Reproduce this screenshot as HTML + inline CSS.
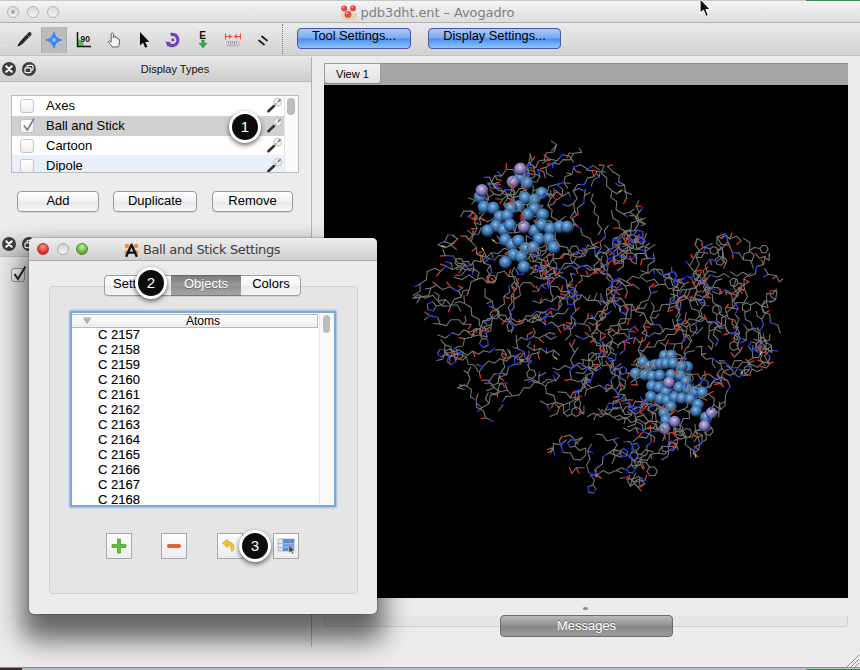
<!DOCTYPE html>
<html lang="en">
<head>
<meta charset="utf-8">
<title>pdb3dht.ent – Avogadro</title>
<style>
*{box-sizing:border-box;margin:0;padding:0}
html,body{width:860px;height:670px;overflow:hidden}
body{position:relative;background:#ececec;font-family:"Liberation Sans",sans-serif;font-size:13px;color:#000}
.abs{position:absolute}
#titlebar{left:0;top:0;width:860px;height:23px;background:linear-gradient(#f4f4f4,#dddddd);border-bottom:1px solid #b0b0b0;border-top:1px solid #c8c8c8}
#titlebar .t{position:absolute;left:360.5px;top:3.5px;font-family:"DejaVu Sans","Liberation Sans",sans-serif;font-size:13px;color:#808080;white-space:nowrap;letter-spacing:-0.1px}
.tl{position:absolute;width:12px;height:12px;border-radius:50%;border:1px solid #b4b4b4;background:linear-gradient(#dcdcdc,#f4f4f4)}
#toolbar{left:0;top:23px;width:860px;height:33px;background:linear-gradient(#ebebeb,#d2d2d2);border-bottom:1px solid #c2c2c2}
.bluebtn{position:absolute;top:28px;height:21px;border:1px solid #4a55a8;border-radius:4px;background:linear-gradient(#a9c9f4 0%,#79aaf0 48%,#4e8fee 52%,#8ec4fb 100%);text-align:center;font-size:12.8px;line-height:14.5px;color:#000}
.dockhead{left:0;width:311px;height:26px;background:linear-gradient(#e9e9e9,#cdcdcd);border-bottom:1px solid #bdbdbd}
.dockhead .lbl{position:absolute;left:0;width:350px;text-align:center;top:6.7px;font-size:11px;color:#111}
.btn{position:absolute;height:21px;border:1px solid #9a9a9a;border-radius:4px;background:linear-gradient(#ffffff,#f2f2f2 50%,#e9e9e9 51%,#f6f6f6);text-align:center;font-size:13px;line-height:17px;box-shadow:0 1px 0 rgba(0,0,0,.08)}
.row{position:absolute;left:0;width:272px;height:20px}
.row .cb{position:absolute;left:8px;top:3px;width:14px;height:14px;border:1px solid #c4c4c4;border-radius:3px;background:linear-gradient(#fff,#efefef)}
.row .tx{position:absolute;left:34px;top:2px;font-size:13px;line-height:16px;white-space:nowrap}
.badge{position:absolute;width:32px;height:32px;border-radius:50%;background:#0c0c0c;border:3px solid #fff;box-shadow:0 2px 5px rgba(0,0,0,.6);color:#fff;font-size:15px;line-height:26px;text-align:center}
.sqbtn{position:absolute;top:533px;width:26px;height:26px;border:1px solid #a8a8a8;background:linear-gradient(#fdfdfd,#ececec)}
.atom{position:absolute;left:26px;font-size:13px;line-height:15px;white-space:nowrap;color:#000;-webkit-text-stroke:0.15px #000}
</style>
</head>
<body>
<!-- main window title bar -->
<div id="titlebar" class="abs">
  <div class="tl" style="left:6.9px;top:4.5px"><div style="position:absolute;left:3px;top:3px;width:4px;height:4px;border-radius:50%;background:#a8a8a8"></div></div>
  <div class="tl" style="left:26.8px;top:4.5px"></div>
  <div class="tl" style="left:46.7px;top:4.5px"></div>
  <svg class="abs" style="left:340px;top:3px" width="18" height="18" viewBox="0 0 18 18"><path d="M1.5 8 Q1.5 5.5 9 5.5 Q16.5 5.5 16.5 8 V12.5 Q16.5 16.5 9 16.5 Q1.5 16.5 1.5 12.5 Z" fill="#e6d4b0"/><ellipse cx="9" cy="8" rx="7.5" ry="3" fill="#f0e2c4"/><circle cx="4.2" cy="4.6" r="3" fill="#e0454c"/><circle cx="13" cy="4.2" r="3" fill="#e0454c"/><circle cx="8" cy="10.4" r="3.4" fill="#e24a52"/><circle cx="3.4" cy="3.6" r="1" fill="#f4a0a4"/><circle cx="12.2" cy="3.2" r="1" fill="#f4a0a4"/><circle cx="7" cy="9.2" r="1.1" fill="#f4a0a4"/></svg>
  <div class="t">pdb3dht.ent – Avogadro</div>
</div>
<!-- toolbar -->
<div id="toolbar" class="abs"></div>
<div class="abs" style="left:41px;top:27px;width:26px;height:26px;background:#bcbcbc;border-left:1px solid #b0b0b0;border-right:1px solid #b0b0b0"></div>
<svg class="abs" style="left:4px;top:28px" width="6" height="20" viewBox="0 0 6 20"><circle cx="1.5" cy="2.0" r="1" fill="#fff"/><circle cx="1.5" cy="2.6" r="0.8" fill="#c4c4c4"/><circle cx="4" cy="4.6" r="1" fill="#fff"/><circle cx="4" cy="5.2" r="0.8" fill="#c4c4c4"/><circle cx="1.5" cy="7.2" r="1" fill="#fff"/><circle cx="1.5" cy="7.800000000000001" r="0.8" fill="#c4c4c4"/><circle cx="4" cy="9.8" r="1" fill="#fff"/><circle cx="4" cy="10.4" r="0.8" fill="#c4c4c4"/><circle cx="1.5" cy="12.4" r="1" fill="#fff"/><circle cx="1.5" cy="13.0" r="0.8" fill="#c4c4c4"/><circle cx="4" cy="15.0" r="1" fill="#fff"/><circle cx="4" cy="15.6" r="0.8" fill="#c4c4c4"/><circle cx="1.5" cy="17.6" r="1" fill="#fff"/><circle cx="1.5" cy="18.200000000000003" r="0.8" fill="#c4c4c4"/></svg>
<svg class="abs" style="left:14px;top:30px" width="20" height="20" viewBox="0 0 20 20"><path d="M3.5 16.5 L6 11.5 L14.5 2.5 Q16 1.5 17.2 2.8 Q18 4 17 5.2 L8.5 14 Z" fill="#2b2b2b"/><path d="M3.5 16.5 L5 13.3 L6.7 15 Z" fill="#111"/><path d="M12.5 4.6 L15.2 7.2" stroke="#999" stroke-width="0.8"/></svg>
<svg class="abs" style="left:44px;top:30px" width="20" height="20" viewBox="0 0 20 20"><path d="M10 2 Q10.8 8.6 18 10 Q10.8 11.4 10 18 Q9.2 11.4 2 10 Q9.2 8.6 10 2 Z" fill="#3f86f2" stroke="#3f86f2" stroke-width="1.2" stroke-linejoin="round"/><circle cx="10" cy="10" r="2" fill="#8cbcff"/></svg>
<svg class="abs" style="left:75px;top:30px" width="20" height="20" viewBox="0 0 20 20"><path d="M2.5 9 A7 7 0 0 1 9 16 H2.5 Z" fill="#52c04a"/><path d="M2.5 2 V16.5 H16" fill="none" stroke="#111" stroke-width="1.4"/><text x="5.5" y="11.5" font-family="Liberation Sans,sans-serif" font-size="8.5" font-weight="bold" fill="#222">90</text></svg>
<svg class="abs" style="left:104px;top:30px" width="20" height="20" viewBox="0 0 20 20"><path d="M7.2 10 V4.2 Q7.2 3 8.3 3 Q9.4 3 9.4 4.2 V8 L9.6 6.4 Q10.6 5.6 11.5 6.6 L11.7 8 Q12.8 7 13.6 8 L13.8 9 Q14.8 8.4 15.4 9.4 V13 Q15.4 15.5 14 17 H8.6 Q6.5 14.5 4.6 12.4 Q4.2 11.2 5.4 11 Q6.2 11 7.2 12.2 Z" fill="#f4f4f4" stroke="#555" stroke-width="0.9" stroke-linejoin="round"/></svg>
<svg class="abs" style="left:134px;top:30px" width="20" height="20" viewBox="0 0 20 20"><path d="M6 2 L6 15.5 L9 12.7 L11.2 17.8 L13.4 16.8 L11.2 11.9 L15.2 11.7 Z" fill="#0a0a0a"/></svg>
<svg class="abs" style="left:163px;top:30px" width="20" height="20" viewBox="0 0 20 20"><path d="M7.6 4.6 A5.6 5.6 0 1 1 5.4 14" fill="none" stroke="#6d44b8" stroke-width="3.2"/><path d="M2.4 11.4 L8 12.2 L4.6 16.8 Z" fill="#6d44b8"/><circle cx="9.8" cy="9.8" r="1.6" fill="#6d44b8"/></svg>
<svg class="abs" style="left:193px;top:29px" width="20" height="22" viewBox="0 0 20 22"><text x="6.2" y="9.5" font-family="Liberation Sans,sans-serif" font-size="10" font-weight="bold" fill="#111">E</text><path d="M8.7 11 H11.3 V14.2 H14 L10 19 L6 14.2 H8.7 Z" fill="#3aa744" stroke="#2a8a34" stroke-width="0.5"/></svg>
<svg class="abs" style="left:223px;top:30px" width="20" height="20" viewBox="0 0 20 20"><path d="M2.5 3.5 V9.5 M17.5 3.5 V9.5 M2.5 6.5 H8 M12 6.5 H17.5 M6 4.6 L8.3 6.5 L6 8.4 M14 4.6 L11.7 6.5 L14 8.4" fill="none" stroke="#f04a40" stroke-width="1.1"/><rect x="3.5" y="11.5" width="13" height="3.4" fill="#d8d8d8" stroke="#aaa" stroke-width="0.4"/><path d="M5.5 11.5v2M7.5 11.5v3M9.5 11.5v2M11.5 11.5v3M13.5 11.5v2" stroke="#666" stroke-width="0.6"/><path d="M3.5 15.8 H16.5" stroke="#8a8ad0" stroke-width="0.6"/></svg>
<svg class="abs" style="left:253px;top:30px" width="20" height="20" viewBox="0 0 20 20"><path d="M6 10.5 L11 14.5 M9 6.5 L14 10.5" stroke="#222" stroke-width="1.9" stroke-linecap="round"/></svg>
<div class="abs" style="left:282px;top:24px;width:0;height:30px;border-left:1px dotted #7e7e7e"></div>
<div class="bluebtn" style="left:297px;width:114px">Tool Settings...</div>
<div class="bluebtn" style="left:428px;width:133px">Display Settings...</div>

<!-- left dock -->
<div class="abs" style="left:311px;top:57px;width:1px;height:590px;background:#b4b4b4"></div>
<div class="abs dockhead" style="top:56px"><div class="lbl">Display Types</div></div>
<svg class="abs" style="left:1px;top:61px" width="38" height="16" viewBox="0 0 38 16"><circle cx="8" cy="8" r="7" fill="#3d3d3d"/><path d="M5.3 5.3 L10.7 10.7 M10.7 5.3 L5.3 10.7" stroke="#fff" stroke-width="2.1" stroke-linecap="round"/><circle cx="28" cy="8" r="7" fill="#3d3d3d"/><rect x="26" y="4.4" width="6" height="4.8" rx="1.2" fill="none" stroke="#fff" stroke-width="1.2"/><rect x="24" y="6.8" width="6" height="4.8" rx="1.2" fill="#3d3d3d" stroke="#fff" stroke-width="1.2"/></svg>
<div class="abs" style="left:11px;top:95px;width:288px;height:78px;border:1px solid #bcbcbc;background:#fff;overflow:hidden">
  <div class="row" style="top:0"><div class="cb"></div><div class="tx">Axes</div></div>
  <div class="row" style="top:20px;background:#d0d0d0"><div class="cb"></div><div class="tx">Ball and Stick</div>
    <svg style="position:absolute;left:9px;top:1px" width="16" height="16" viewBox="0 0 16 16"><path d="M3 8.5 L6.3 13 L13 1.5" fill="none" stroke="#7c7c7c" stroke-width="1.6"/></svg></div>
  <div class="row" style="top:40px"><div class="cb"></div><div class="tx">Cartoon</div></div>
  <div class="row" style="top:59px;background:#eaf0fb"><div class="cb" style="top:4px"></div><div class="tx" style="top:3px">Dipole</div></div>
  <svg style="position:absolute;left:254px;top:1px" width="17" height="17" viewBox="0 0 17 17"><path d="M2.4 14.2 L8 9" stroke="#333" stroke-width="2.7" stroke-linecap="round"/><circle cx="11.6" cy="5.2" r="3.9" fill="#f0f0f0" stroke="#b4b4b4" stroke-width="0.8"/><path d="M11.8 5 L14.6 2.2" stroke="#777" stroke-width="1.6"/><path d="M9.2 7.6 L10.6 6.2" stroke="#999" stroke-width="1.2"/></svg><svg style="position:absolute;left:254px;top:21px" width="17" height="17" viewBox="0 0 17 17"><path d="M2.4 14.2 L8 9" stroke="#333" stroke-width="2.7" stroke-linecap="round"/><circle cx="11.6" cy="5.2" r="3.9" fill="#f0f0f0" stroke="#b4b4b4" stroke-width="0.8"/><path d="M11.8 5 L14.6 2.2" stroke="#777" stroke-width="1.6"/><path d="M9.2 7.6 L10.6 6.2" stroke="#999" stroke-width="1.2"/></svg><svg style="position:absolute;left:254px;top:41px" width="17" height="17" viewBox="0 0 17 17"><path d="M2.4 14.2 L8 9" stroke="#333" stroke-width="2.7" stroke-linecap="round"/><circle cx="11.6" cy="5.2" r="3.9" fill="#f0f0f0" stroke="#b4b4b4" stroke-width="0.8"/><path d="M11.8 5 L14.6 2.2" stroke="#777" stroke-width="1.6"/><path d="M9.2 7.6 L10.6 6.2" stroke="#999" stroke-width="1.2"/></svg><svg style="position:absolute;left:254px;top:61px" width="17" height="17" viewBox="0 0 17 17"><path d="M2.4 14.2 L8 9" stroke="#333" stroke-width="2.7" stroke-linecap="round"/><circle cx="11.6" cy="5.2" r="3.9" fill="#f0f0f0" stroke="#b4b4b4" stroke-width="0.8"/><path d="M11.8 5 L14.6 2.2" stroke="#777" stroke-width="1.6"/><path d="M9.2 7.6 L10.6 6.2" stroke="#999" stroke-width="1.2"/></svg>
  <div style="position:absolute;left:272px;top:0;width:15px;height:78px;background:#fafafa;border-left:1px solid #e4e4e4"></div>
  <div style="position:absolute;left:275px;top:2px;width:8px;height:17px;border-radius:4px;background:#bcbcbc"></div>
</div>
<div class="btn" style="left:17px;top:191px;width:82px">Add</div>
<div class="btn" style="left:113px;top:191px;width:84px">Duplicate</div>
<div class="btn" style="left:212px;top:191px;width:81px">Remove</div>
<div class="abs dockhead" style="top:231px"></div>
<svg class="abs" style="left:1px;top:236px" width="38" height="16" viewBox="0 0 38 16"><circle cx="8" cy="8" r="7" fill="#3d3d3d"/><path d="M5.3 5.3 L10.7 10.7 M10.7 5.3 L5.3 10.7" stroke="#fff" stroke-width="2.1" stroke-linecap="round"/><circle cx="28" cy="8" r="7" fill="#3d3d3d"/><rect x="26" y="4.4" width="6" height="4.8" rx="1.2" fill="none" stroke="#fff" stroke-width="1.2"/><rect x="24" y="6.8" width="6" height="4.8" rx="1.2" fill="#3d3d3d" stroke="#fff" stroke-width="1.2"/></svg>
<div class="abs" style="left:11px;top:268px;width:14px;height:14px;border:1px solid #9a9a9a;border-radius:3px;background:linear-gradient(#fff,#e8e8e8)"></div>
<svg class="abs" style="left:11px;top:264px" width="18" height="18" viewBox="0 0 18 18"><path d="M3.5 10 L7 15 L14.5 2.5" fill="none" stroke="#222" stroke-width="2"/></svg>

<!-- right view -->
<div class="abs" style="left:324px;top:63px;width:524px;height:22px;background:#a6a6a6;border-top:1px solid #8f8f8f"></div>
<div class="abs" style="left:324px;top:63px;width:57px;height:21px;background:linear-gradient(#f2f2f2,#e2e2e2);border:1px solid #9c9c9c;border-bottom-color:#8a8a8a;border-radius:0 0 4px 4px;font-size:11px;line-height:21px;padding-left:11px">View 1</div>
<div class="abs" style="left:324px;top:85px;width:524px;height:513px;background:#000"></div>
<svg class="abs" style="left:324px;top:85px" width="524" height="513" viewBox="0 0 524 513">
<defs><radialGradient id="sb" cx="44%" cy="36%" r="60%"><stop offset="0" stop-color="#9ccaf0"/><stop offset="0.2" stop-color="#679fd2"/><stop offset="0.55" stop-color="#4278ae"/><stop offset="0.82" stop-color="#284f7c"/><stop offset="1" stop-color="#10263e"/></radialGradient><radialGradient id="sp" cx="44%" cy="36%" r="60%"><stop offset="0" stop-color="#dccff0"/><stop offset="0.25" stop-color="#aa9ed0"/><stop offset="0.6" stop-color="#7c74b0"/><stop offset="0.85" stop-color="#504a86"/><stop offset="1" stop-color="#26224a"/></radialGradient></defs>
<g fill="none" stroke-linecap="round">
<path stroke="#747474" stroke-width="1.1" d="M244.2 223.7L240.0 229.0M240.0 229.0L233.6 228.1M233.6 228.1L228.8 232.0M228.8 232.0L227.6 228.7M228.8 232.0L225.6 231.3M222.3 230.7L224.7 228.4M222.3 230.7L215.6 235.8M215.6 235.8L214.4 232.5M215.6 235.8L209.1 232.4M209.1 232.4L213.2 229.0M209.1 232.4L203.1 236.5M388.4 206.5L395.6 209.2M395.6 209.2L396.3 206.6M395.6 209.2L398.4 206.9M401.2 204.7L401.9 207.4M401.2 204.7L408.3 208.7M408.3 208.7L414.7 203.6M414.7 203.6L416.5 206.2M414.7 203.6L420.7 204.8M420.7 204.8L419.6 199.3M419.6 199.3L414.2 198.1M414.2 198.1L411.3 201.3M411.3 201.3L407.1 200.4M407.1 200.4L405.8 196.3M405.8 196.3L408.7 193.2M408.7 193.2L412.9 194.1M412.9 194.1L414.2 198.1M420.7 204.8L423.5 211.7M423.5 211.7L419.8 217.9M419.8 217.9L412.7 217.5M412.7 217.5L409.1 223.4M409.1 223.4L411.9 223.6M334.4 319.5L335.6 326.9M335.6 326.9L342.4 329.9M342.4 329.9L344.5 337.9M344.5 337.9L347.4 339.4M350.2 340.8L351.1 338.1M350.2 340.8L349.4 348.7M349.4 348.7L353.6 346.0M353.6 346.0L358.4 347.0M358.4 347.0L361.5 343.5M361.5 343.5L366.1 344.4M366.1 344.4L367.6 348.9M367.6 348.9L364.5 352.4M364.5 352.4L359.9 351.5M359.9 351.5L358.4 347.0M349.4 348.7L354.2 353.6M354.2 353.6L352.0 354.7M354.2 353.6L352.5 361.0M352.5 361.0L348.8 363.0M345.1 365.1L343.6 371.6M343.6 371.6L337.8 374.7M155.7 169.5L162.3 172.7M162.3 172.7L161.7 170.3M162.3 172.7L167.5 167.7M167.5 167.7L169.2 173.0M167.5 167.7L174.2 168.5M174.2 168.5L180.1 163.3M180.1 163.3L185.8 165.2M185.8 165.2L183.2 167.1M185.8 165.2L191.3 161.6M191.3 161.6L193.0 166.5M193.0 166.5L195.8 166.6M191.3 161.6L198.0 163.0M198.0 163.0L202.6 158.3M202.6 158.3L203.7 161.0M202.6 158.3L202.1 150.7M202.1 150.7L205.0 152.2M260.2 382.8L252.1 382.8M252.1 382.8L253.7 385.8M252.1 382.8L248.0 388.4M248.0 388.4L246.6 385.3M228.6 143.8L222.1 146.4M222.1 146.4L224.4 151.4M224.4 151.4L220.7 155.5M222.1 146.4L220.1 152.4M220.1 152.4L223.5 152.7M220.1 152.4L224.6 156.5M224.6 156.5L222.5 157.9M224.6 156.5L224.7 164.9M224.7 164.9L229.8 168.9M229.8 168.9L226.6 170.0M229.8 168.9L228.7 174.9M228.7 174.9L232.9 179.2M232.9 179.2L231.8 187.6M231.8 187.6L224.4 189.5M163.4 107.7L164.6 114.8M164.6 114.8L159.5 114.4M159.5 114.4L158.6 111.7M164.6 114.8L158.7 119.8M158.7 119.8L161.0 122.2M158.7 119.8L160.8 127.5M160.8 127.5L154.7 128.3M160.8 127.5L155.2 133.1M155.2 133.1L157.8 134.3M155.2 133.1L157.1 139.8M157.1 139.8L153.8 138.7M196.8 268.5L193.7 269.8M190.7 271.2L194.1 274.7M194.1 274.7L196.9 274.9M190.7 271.2L190.7 275.2M190.7 279.2L196.4 279.0M196.4 279.0L199.8 274.5M190.7 279.2L187.7 280.7M184.7 282.1L182.8 289.4M182.8 289.4L177.1 287.8M182.8 289.4L175.3 292.3M175.3 292.3L177.8 294.2M175.3 292.3L173.8 298.3M173.8 298.3L178.8 298.2M178.8 298.2L179.9 300.8M173.8 298.3L166.9 301.1M278.4 265.9L280.6 259.9M280.6 259.9L278.4 257.6M276.2 255.3L278.9 253.1M276.2 255.3L276.8 247.2M276.8 247.2L279.2 248.6M276.8 247.2L271.8 243.1M271.8 243.1L274.2 240.8M271.8 243.1L273.1 235.9M273.1 235.9L266.9 231.8M267.1 101.1L269.9 94.4M269.9 94.4L272.7 93.2M275.5 92.1L273.7 89.9M275.5 92.1L275.6 88.6M275.7 85.1L269.4 80.6M269.4 80.6L266.5 82.3M263.6 83.9L256.5 79.8M256.5 79.8L253.1 80.9M249.7 82.1L251.9 86.2M251.9 86.2L254.3 86.9M249.7 82.1L247.9 89.4M247.9 89.4L242.4 87.8M247.9 89.4L241.1 91.6M241.1 91.6L239.9 97.7M239.9 97.7L246.2 98.3M239.9 97.7L243.8 103.1M162.6 305.7L170.1 302.6M170.1 302.6L166.6 297.9M166.6 297.9L163.4 298.1M170.1 302.6L175.9 306.7M175.9 306.7L171.4 309.9M171.4 309.9L166.4 307.7M175.9 306.7L183.2 305.0M183.2 305.0L182.2 302.0M183.2 305.0L188.4 311.0M188.4 311.0L182.1 311.4M182.1 311.4L180.1 314.3M188.4 311.0L195.4 309.8M195.4 309.8L199.8 302.7M199.8 302.7L205.9 302.9M205.9 302.9L210.5 297.1M210.5 297.1L206.0 294.1M206.0 294.1L200.7 295.5M210.5 297.1L217.9 298.7M217.9 298.7L223.2 294.3M223.2 294.3L231.6 295.8M231.6 295.8L230.3 292.7M231.6 295.8L235.6 290.7M235.6 290.7L233.0 288.6M217.0 103.4L209.1 105.7M209.1 105.7L209.3 101.1M209.3 101.1L207.1 100.0M209.1 105.7L208.7 108.6M208.2 111.6L214.3 111.8M214.3 111.8L215.8 108.8M208.2 111.6L202.3 114.4M202.3 114.4L201.8 110.9M202.3 114.4L199.0 112.5M195.6 110.6L189.0 112.6M189.0 112.6L191.0 107.2M191.0 107.2L188.4 102.0M189.0 112.6L183.0 108.5M183.0 108.5L183.2 113.1M183.2 113.1L185.6 114.1M303.5 341.7L311.2 339.4M311.2 339.4L313.0 331.9M313.0 331.9L320.0 330.3M320.0 330.3L317.5 328.2M320.0 330.3L324.9 336.7M324.9 336.7L321.2 339.4M321.2 339.4L321.3 343.9M324.9 336.7L332.8 336.3M332.8 336.3L330.5 342.3M330.5 342.3L327.0 343.1M210.8 191.5L217.1 194.0M217.1 194.0L223.9 191.1M223.9 191.1L230.3 193.8M230.3 193.8L228.2 196.1M230.3 193.8L236.1 190.9M236.1 190.9L239.1 192.7M242.1 194.6L243.3 201.4M243.3 201.4L246.1 200.1M243.3 201.4L249.3 202.4M249.3 202.4L251.2 208.8M341.1 309.6L345.1 310.7M349.2 311.8L348.2 314.8M349.2 311.8L355.9 307.0M355.9 307.0L359.5 307.7M363.0 308.5L359.9 312.8M359.9 312.8L356.9 313.2M363.0 308.5L368.7 304.1M368.7 304.1L371.4 305.4M374.1 306.7L378.9 302.2M378.9 302.2L379.2 305.7M378.9 302.2L385.0 302.6M385.0 302.6L384.0 300.2M385.0 302.6L388.2 297.4M388.2 297.4L394.8 297.0M394.8 297.0L399.6 301.9M277.0 208.6L276.9 216.3M276.9 216.3L283.1 219.5M283.1 219.5L289.3 215.9M289.3 215.9L287.6 213.8M289.3 215.9L292.0 217.8M294.7 219.7L295.8 226.1M295.8 226.1L302.4 230.3M302.4 230.3L303.7 224.8M303.7 224.8L301.8 222.3M302.4 230.3L301.1 237.6M301.1 237.6L295.0 239.3M295.0 239.3L298.2 244.8M298.2 244.8L304.6 244.1M295.0 239.3L294.3 246.7M294.3 246.7L288.8 250.7M118.8 164.3L121.0 170.5M121.0 170.5L118.3 170.8M121.0 170.5L125.2 170.8M129.4 171.0L133.7 178.1M133.7 178.1L141.0 179.0M141.0 179.0L138.1 183.8M138.1 183.8L132.5 184.3M141.0 179.0L144.7 185.2M144.7 185.2L151.6 185.2M311.3 131.3L306.1 127.0M306.1 127.0L310.3 124.1M306.1 127.0L299.3 128.9M299.3 128.9L301.4 130.5M299.3 128.9L292.1 124.7M292.1 124.7L292.8 116.4M292.8 116.4L286.7 112.4M286.7 112.4L288.0 105.7M288.0 105.7L293.0 108.7M293.0 108.7L295.5 106.8M288.0 105.7L282.7 101.1M282.7 101.1L282.7 93.0M282.7 93.0L277.3 88.1M277.3 88.1L280.1 80.1M280.1 80.1L277.4 80.2M358.8 286.9L366.1 288.1M366.1 288.1L369.6 293.3M369.6 293.3L367.6 296.5M365.6 299.7L358.9 299.2M358.9 299.2L360.6 302.2M358.9 299.2L355.2 304.6M355.2 304.6L358.3 305.5M355.2 304.6L358.7 309.6M358.7 309.6L356.2 317.3M412.1 194.1L409.6 202.0M409.6 202.0L413.3 208.7M413.3 208.7L417.5 204.5M417.5 204.5L417.3 201.2M413.3 208.7L409.6 216.2M409.6 216.2L411.8 219.6M414.1 222.9L412.6 226.1M411.2 229.4L415.0 234.1M415.0 234.1L411.8 241.9M411.8 241.9L408.0 239.2M408.0 239.2L408.3 236.6M411.8 241.9L415.7 247.3M415.7 247.3L410.5 250.3M410.5 250.3L410.2 256.2M410.2 256.2L414.1 258.8M414.1 258.8L413.8 263.4M413.8 263.4L409.7 265.5M409.7 265.5L405.8 262.9M405.8 262.9L406.0 258.3M406.0 258.3L410.2 256.2M415.7 247.3L412.9 254.9M412.9 254.9L410.7 253.8M207.4 187.8L213.3 186.8M213.3 186.8L215.2 183.5M217.0 180.1L218.3 182.6M217.0 180.1L224.6 180.8M224.6 180.8L228.8 173.9M228.8 173.9L235.6 173.4M235.6 173.4L239.8 168.3M239.8 168.3L247.2 170.6M247.2 170.6L249.8 168.8M252.4 166.9L255.4 168.1M258.4 169.2L256.7 171.3M258.4 169.2L263.1 165.4M263.1 165.4L260.3 164.1M251.0 254.6L247.5 262.0M247.5 262.0L246.4 259.8M247.5 262.0L250.8 267.4M250.8 267.4L254.0 262.6M250.8 267.4L246.5 274.7M246.5 274.7L249.4 281.3M249.4 281.3L254.6 278.1M254.6 278.1L257.8 279.2M249.4 281.3L247.7 283.8M245.9 286.2L247.4 294.5M247.4 294.5L243.8 295.0M247.4 294.5L254.3 297.1M254.3 297.1L261.7 293.4M261.7 293.4L266.6 297.2M378.9 207.4L382.5 201.3M382.5 201.3L385.1 205.7M385.1 205.7L384.5 208.4M382.5 201.3L378.5 194.0M378.5 194.0L383.2 187.0M383.2 187.0L381.3 180.5M381.3 180.5L383.5 177.4M385.7 174.3L386.8 177.3M385.7 174.3L389.5 175.3M393.3 176.2L399.6 171.0M399.6 171.0L398.1 163.0M398.1 163.0L393.9 166.1M393.9 166.1L395.0 171.3M395.0 171.3L399.4 172.7M399.4 172.7L400.4 177.2M400.4 177.2L396.9 180.3M396.9 180.3L392.6 178.9M392.6 178.9L391.6 174.4M391.6 174.4L395.0 171.3M398.1 163.0L404.1 156.9M404.1 156.9L405.5 160.2M404.1 156.9L402.9 153.4M401.7 149.8L399.1 152.0M190.3 182.4L187.7 188.0M187.7 188.0L190.9 195.9M190.9 195.9L187.3 200.8M187.3 200.8L190.1 202.8M187.3 200.8L190.7 206.1M190.7 206.1L193.1 201.9M193.1 201.9L190.9 197.6M190.7 206.1L187.0 211.1M187.0 211.1L189.4 212.2M187.0 211.1L188.1 217.2M188.1 217.2L184.0 222.8M184.0 222.8L187.3 229.4M187.3 229.4L184.3 235.6M184.3 235.6L181.3 230.3M181.3 230.3L175.2 229.9M175.2 229.9L172.7 233.8M172.7 233.8L168.1 233.5M168.1 233.5L166.0 229.4M166.0 229.4L168.6 225.5M168.6 225.5L173.2 225.8M173.2 225.8L175.2 229.9M184.3 235.6L186.9 238.9M189.6 242.2L187.2 247.8M289.6 154.0L297.8 152.7M297.8 152.7L300.3 146.3M300.3 146.3L304.4 150.1M304.4 150.1L309.9 149.9M309.9 149.9L313.2 145.0M318.8 146.6L319.0 152.4M313.5 154.4L309.9 149.9M300.3 146.3L306.9 144.6M306.9 144.6L306.8 149.9M306.8 149.9L304.5 151.5M306.9 144.6L307.6 137.7M307.6 137.7L315.0 134.9M315.0 134.9L311.1 131.0M311.1 131.0L308.1 130.7M315.0 134.9L321.4 138.9M321.4 138.9L317.1 140.8M321.4 138.9L315.2 136.9M315.2 136.9L317.6 133.0M315.2 136.9L313.6 130.0M135.2 188.0L139.3 181.1M139.3 181.1L143.0 181.0M146.6 180.8L144.2 176.4M144.2 176.4L139.2 176.8M139.2 176.8L137.4 180.6M137.4 180.6L133.3 180.9M133.3 180.9L130.9 177.5M130.9 177.5L132.7 173.8M132.7 173.8L136.8 173.4M136.8 173.4L139.2 176.8M146.6 180.8L150.6 175.4M150.6 175.4L156.8 177.0M156.8 177.0L156.8 174.5M156.8 177.0L159.9 174.8M163.0 172.5L166.7 173.9M170.3 175.2L174.5 170.5M174.5 170.5L181.2 171.1M181.2 171.1L185.1 166.2M161.2 203.9L161.1 211.7M161.1 211.7L168.1 216.0M168.1 216.0L162.9 218.6M168.1 216.0L169.5 222.9M169.5 222.9L167.2 222.0M169.5 222.9L174.7 225.9M174.7 225.9L175.4 233.1M175.4 233.1L181.8 237.0M181.8 237.0L184.9 235.3M188.0 233.5L192.9 237.1M192.9 237.1L199.6 235.3M265.9 107.5L260.4 110.5M260.4 110.5L261.0 107.2M260.4 110.5L260.1 114.3M259.8 118.1L253.3 123.1M253.3 123.1L254.2 129.4M254.2 129.4L248.9 132.4M248.9 132.4L250.1 139.5M250.1 139.5L253.4 141.4M256.7 143.3L258.3 150.1M258.3 150.1L266.1 153.4M266.1 153.4L268.7 160.2M268.7 160.2L271.6 158.6M268.7 160.2L274.9 162.8M225.9 195.8L221.6 191.4M221.6 191.4L222.7 184.7M222.7 184.7L217.3 181.1M217.3 181.1L215.7 183.6M217.3 181.1L217.8 174.9M217.8 174.9L223.8 176.4M217.8 174.9L214.6 172.2M274.6 388.7L270.5 389.5M266.4 390.2L270.4 394.4M270.4 394.4L268.9 400.0M268.9 400.0L272.1 404.0M269.3 408.3L264.4 406.9M264.1 401.8L268.9 400.0M266.4 390.2L272.5 389.6M272.5 389.6L277.2 393.7M89.2 210.5L96.2 206.1M96.2 206.1L96.0 198.9M96.0 198.9L93.2 200.4M96.0 198.9L102.4 194.7M102.4 194.7L103.3 186.6M103.3 186.6L111.1 183.3M111.1 183.3L116.6 186.2M116.6 186.2L114.5 188.8M116.6 186.2L119.4 183.8M122.2 181.3L119.1 180.1M122.2 181.3L128.4 184.5M128.4 184.5L127.5 178.4M127.5 178.4L124.2 177.5M128.4 184.5L136.0 181.5M136.0 181.5L141.7 185.0M141.7 185.0L137.8 190.0M137.8 190.0L134.3 190.3M141.7 185.0L148.5 183.2M92.9 217.8L96.3 212.1M96.3 212.1L104.7 210.6M104.7 210.6L106.9 203.1M106.9 203.1L101.2 204.0M106.9 203.1L112.6 200.2M112.6 200.2L110.7 198.5M112.6 200.2L118.5 204.6M118.5 204.6L126.3 201.8M126.3 201.8L124.3 199.2M126.3 201.8L129.8 204.1M133.3 206.4L138.8 202.8M138.8 202.8L136.4 201.8M210.8 83.0L205.2 76.7M205.2 76.7L203.8 79.7M205.2 76.7L206.2 68.7M206.2 68.7L207.9 75.8M207.9 75.8L209.5 73.7M207.9 75.8L205.7 79.0M203.4 82.2L205.5 89.9M205.5 89.9L202.5 88.6M205.5 89.9L200.1 94.5M200.1 94.5L203.0 95.3M200.1 94.5L202.3 102.3M202.3 102.3L206.8 99.1M206.8 99.1L207.0 93.5M207.0 93.5L203.2 91.3M203.2 91.3L203.3 86.9M203.3 86.9L207.2 84.8M207.2 84.8L210.9 87.1M210.9 87.1L210.8 91.5M210.8 91.5L207.0 93.5M202.3 102.3L197.4 108.2M379.3 345.3L371.3 345.6M371.3 345.6L373.8 351.4M373.8 351.4L370.2 356.5M371.3 345.6L368.4 351.9M368.4 351.9L362.4 352.2M362.4 352.2L358.8 345.1M358.8 345.1L350.6 343.2M350.6 343.2L351.8 349.3M351.8 349.3L357.8 350.6M350.6 343.2L346.7 336.9M346.7 336.9L344.4 338.3M346.7 336.9L342.9 337.7M339.1 338.4L334.8 345.7M334.8 345.7L333.1 342.7M334.8 345.7L330.7 346.3M326.6 346.9L326.4 343.4M326.6 346.9L322.6 352.9M322.6 352.9L314.8 351.6M314.8 351.6L317.1 349.1M314.8 351.6L309.2 356.5M139.9 210.5L140.5 218.5M140.5 218.5L135.7 216.4M135.7 216.4L130.8 218.1M140.5 218.5L147.2 222.5M147.2 222.5L147.8 230.4M147.8 230.4L155.1 234.3M155.1 234.3L155.5 240.4M155.5 240.4L161.8 244.5M161.8 244.5L163.1 252.1M163.1 252.1L157.0 250.5M157.0 250.5L156.4 247.1M354.1 199.3L348.9 204.9M348.9 204.9L355.3 205.9M355.3 205.9L358.9 200.6M348.9 204.9L350.9 213.1M350.9 213.1L348.4 216.1M345.9 219.1L337.7 219.7M337.7 219.7L335.7 225.5M335.7 225.5L328.8 226.7M328.8 226.7L330.5 221.8M330.5 221.8L327.3 217.8M328.8 226.7L326.3 232.3M326.3 232.3L331.5 233.2M331.5 233.2L334.8 229.2M326.3 232.3L329.1 239.2M329.1 239.2L325.8 238.6M329.1 239.2L335.6 239.8M335.6 239.8L339.8 247.1M252.2 358.1L258.4 352.5M258.4 352.5L251.4 355.2M251.4 355.2L254.0 359.2M251.4 355.2L245.9 350.0M245.9 350.0L240.1 351.6M251.7 250.6L255.5 252.4M259.3 254.2L265.7 251.2M265.7 251.2L263.2 249.1M265.7 251.2L271.3 254.2M271.3 254.2L268.7 255.9M271.3 254.2L272.7 260.4M272.7 260.4L279.5 261.4M279.5 261.4L278.6 256.9M279.5 261.4L281.1 267.6M329.2 366.9L321.5 364.7M321.5 364.7L316.8 369.7M316.8 369.7L321.8 370.7M316.8 369.7L309.6 366.7M309.6 366.7L306.9 368.7M304.2 370.6L308.1 374.7M308.1 374.7L307.5 380.3M307.5 380.3L311.2 383.6M309.2 388.0L304.3 387.5M303.3 382.8L307.5 380.3M304.2 370.6L297.6 366.7M297.6 366.7L292.3 370.6M292.3 370.6L297.8 372.3M292.3 370.6L285.3 367.7M285.3 367.7L290.1 364.3M290.1 364.3L295.6 366.2M295.6 366.2L299.7 363.4M303.7 366.4L302.1 371.1M297.1 371.0L295.6 366.2M285.3 367.7L282.2 369.7M279.1 371.8L278.4 379.0M278.4 379.0L272.3 383.3M272.3 383.3L271.4 391.7M271.4 391.7L273.9 391.4M355.7 281.9L351.1 275.5M351.1 275.5L349.6 278.5M351.1 275.5L353.1 269.8M353.1 269.8L349.5 264.9M349.5 264.9L351.0 259.0M351.0 259.0L347.6 258.8M351.0 259.0L357.8 258.2M357.8 258.2L357.9 261.5M357.8 258.2L360.8 252.6M125.3 263.6L130.3 269.4M130.3 269.4L125.9 271.7M125.9 271.7L121.3 269.6M121.3 269.6L117.1 272.0M113.6 268.7L115.6 264.4M120.4 264.9L121.3 269.6M130.3 269.4L133.8 268.1M137.2 266.8L143.5 270.3M143.5 270.3L148.7 266.0M148.7 266.0L149.9 268.9M148.7 266.0L154.3 269.2M154.3 269.2L159.4 265.7M159.4 265.7L165.8 267.3M165.8 267.3L168.2 265.2M210.8 202.3L206.5 197.6M206.5 197.6L198.9 197.7M198.9 197.7L195.2 202.5M195.2 202.5L192.5 198.3M192.5 198.3L193.6 195.8M195.2 202.5L196.4 210.5M196.4 210.5L189.7 214.7M189.7 214.7L189.6 212.0M189.7 214.7L190.2 222.6M190.2 222.6L187.9 225.0M185.6 227.5L188.0 234.4M188.0 234.4L182.0 234.4M182.0 234.4L180.0 236.9M188.0 234.4L183.0 239.6M183.0 239.6L184.4 246.5M184.4 246.5L188.5 244.6M188.5 244.6L188.4 239.9M143.7 145.4L149.3 150.1M149.3 150.1L147.3 156.7M147.3 156.7L144.9 154.7M147.3 156.7L152.7 162.5M152.7 162.5L150.2 164.4M152.7 162.5L152.5 168.9M152.5 168.9L155.2 167.6M152.5 168.9L158.3 171.9M158.3 171.9L160.5 167.5M160.5 167.5L159.2 165.1M158.3 171.9L159.8 178.2M159.8 178.2L164.4 174.2M159.8 178.2L166.2 180.3M166.2 180.3L163.2 185.4M163.2 185.4L166.1 190.5M166.1 190.5L170.2 190.5M170.2 190.5L172.3 194.1M172.3 194.1L170.2 197.6M170.2 197.6L166.1 197.6M166.1 197.6L164.0 194.0M164.0 194.0L166.1 190.5M166.2 180.3L167.0 183.8M167.8 187.4L163.3 191.5M163.3 191.5L165.2 197.6M113.9 249.9L121.8 253.0M121.8 253.0L124.8 250.4M127.8 247.7L134.8 250.1M134.8 250.1L139.8 245.0M139.8 245.0L146.1 247.1M146.1 247.1L152.0 243.3M152.0 243.3L153.0 247.7M152.0 243.3L159.7 246.3M159.7 246.3L166.0 242.0M272.9 208.1L269.9 215.1M269.9 215.1L274.6 215.9M274.6 215.9L277.1 219.9M269.9 215.1L263.7 215.5M263.7 215.5L266.0 210.3M263.7 215.5L257.7 209.8M257.7 209.8L255.5 214.2M255.5 214.2L250.7 215.2M250.7 215.2L248.7 219.6M243.9 219.1L242.9 214.4M247.1 212.0L250.7 215.2M257.7 209.8L250.2 210.8M250.2 210.8L250.6 207.7M250.2 210.8L247.9 208.6M245.6 206.4L241.9 210.3M241.9 210.3L239.1 209.6M245.6 206.4L237.3 206.9M237.3 206.9L238.0 203.6M237.3 206.9L233.8 201.9M233.8 201.9L226.3 201.0M226.3 201.0L226.9 207.4M226.3 201.0L225.0 197.5M223.7 194.1L229.2 192.2M223.7 194.1L217.1 192.8M217.1 192.8L219.1 188.2M219.1 188.2L221.8 187.4M217.1 192.8L215.6 186.2M215.6 186.2L218.7 186.8M287.1 330.6L294.2 335.1M294.2 335.1L302.1 332.3M302.1 332.3L300.1 338.4M302.1 332.3L307.1 337.4M307.1 337.4L314.9 334.6M314.9 334.6L321.0 338.5M321.0 338.5L328.1 334.7M328.1 334.7L329.0 328.2M329.0 328.2L323.4 324.7M323.4 324.7L327.5 319.9M327.5 319.9L333.7 318.8M370.4 265.7L362.3 267.2M362.3 267.2L359.9 272.8M359.9 272.8L352.4 274.1M352.4 274.1L347.7 281.0M347.7 281.0L352.5 284.2M352.5 284.2L351.6 289.9M347.7 281.0L339.3 279.7M339.3 279.7L333.0 284.7M333.0 284.7L326.9 282.7M326.9 282.7L327.8 280.1M326.9 282.7L319.8 287.1M190.8 147.9L199.1 146.1M199.1 146.1L196.9 144.0M199.1 146.1L201.3 139.9M201.3 139.9L199.0 137.4M196.8 135.0L198.1 127.2M198.1 127.2L201.6 126.3M205.0 125.4L203.3 121.0M203.3 121.0L204.2 118.7M205.0 125.4L209.7 131.4M209.7 131.4L207.0 133.0M209.7 131.4L216.6 130.8M216.6 130.8L218.5 133.2M220.5 135.6L215.0 138.5M215.0 138.5L212.0 136.8M220.5 135.6L226.8 136.1M226.8 136.1L230.7 141.8M332.9 206.5L329.8 207.5M326.8 208.5L325.1 202.7M325.1 202.7L327.7 200.8M326.8 208.5L324.0 215.1M324.0 215.1L316.6 217.6M316.6 217.6L314.6 223.5M314.6 223.5L319.9 223.1M319.9 223.1L322.7 218.7M314.6 223.5L307.2 226.0M307.2 226.0L307.4 223.0M307.2 226.0L306.8 233.7M427.3 177.7L430.0 170.2M430.0 170.2L425.2 165.8M425.2 165.8L430.2 162.5M430.2 162.5L436.0 163.5M436.0 163.5L438.6 160.3M438.6 160.3L442.7 161.0M442.7 161.0L444.1 164.8M444.1 164.8L441.5 168.0M441.5 168.0L437.5 167.3M437.5 167.3L436.0 163.5M425.2 165.8L426.2 158.0M426.2 158.0L419.8 153.4M388.3 158.9L385.2 159.7M382.2 160.6L380.7 164.0M379.2 167.3L381.7 167.8M379.2 167.3L373.1 167.0M373.1 167.0L369.4 173.9M369.4 173.9L368.0 171.6M369.4 173.9L365.6 181.0M365.6 181.0L363.6 178.3M365.6 181.0L370.4 186.7M370.4 186.7L368.9 190.0M367.4 193.3L365.0 192.1M367.4 193.3L370.5 199.9M284.2 140.6L280.4 145.7M280.4 145.7L281.0 148.8M281.5 151.9L275.9 157.1M275.9 157.1L277.2 163.2M277.2 163.2L272.7 169.6M272.7 169.6L275.1 176.0M275.1 176.0L270.0 180.5M270.0 180.5L270.8 186.8M270.8 186.8L273.3 185.6M270.8 186.8L264.4 191.9M264.4 191.9L263.2 188.8M264.4 191.9L256.8 190.3M256.8 190.3L258.3 194.9M258.3 194.9L256.2 196.6M362.3 227.5L360.9 235.3M360.9 235.3L365.9 239.1M365.9 239.1L363.9 240.8M365.9 239.1L366.4 246.1M366.4 246.1L373.0 248.6M373.0 248.6L378.5 242.6M175.1 137.9L169.7 133.8M169.7 133.8L163.4 136.7M163.4 136.7L157.0 133.1M157.0 133.1L150.6 135.1M150.6 135.1L150.8 132.1M150.6 135.1L147.3 133.3M144.1 131.5L149.1 128.0M315.2 204.1L309.3 199.4M309.3 199.4L301.0 201.2M301.0 201.2L295.7 195.6M295.7 195.6L294.0 197.7M295.7 195.6L289.0 195.6M289.0 195.6L285.3 189.2M285.3 189.2L277.5 188.7M277.5 188.7L280.9 184.8M280.9 184.8L278.8 180.2M277.5 188.7L273.8 183.4M273.8 183.4L272.0 186.4M273.8 183.4L266.2 185.3M266.2 185.3L262.9 183.0M259.6 180.7L252.0 183.7M252.0 183.7L253.0 186.2M252.0 183.7L249.2 182.0M246.4 180.2L239.6 184.0M263.4 331.4L269.8 328.2M269.8 328.2L277.2 331.9M277.2 331.9L282.7 328.2M282.7 328.2L279.9 326.3M282.7 328.2L289.5 332.4M289.5 332.4L295.9 330.3M295.9 330.3L300.9 334.2M300.9 334.2L307.5 330.1M307.5 330.1L303.8 326.9M307.5 330.1L308.2 326.9M308.8 323.7L311.0 325.2M308.8 323.7L317.2 322.3M317.2 322.3L316.2 324.7M317.2 322.3L318.7 318.8M320.2 315.3L327.7 313.7M327.7 313.7L332.8 318.7M332.8 318.7L333.2 316.0M100.3 234.9L103.2 232.8M106.0 230.8L103.2 228.8M106.0 230.8L109.9 231.5M113.7 232.2L116.1 239.1M116.1 239.1L112.6 238.7M116.1 239.1L122.5 240.6M122.5 240.6L126.7 234.8M126.7 234.8L134.7 234.7M134.7 234.7L139.0 239.3M139.0 239.3L142.1 235.7M142.1 235.7L141.0 231.0M139.0 239.3L147.1 239.2M147.1 239.2L145.7 241.9M363.1 261.8L359.8 267.2M359.8 267.2L360.9 270.3M362.0 273.5L357.3 273.8M357.3 273.8L356.4 276.2M362.0 273.5L358.2 280.2M358.2 280.2L362.8 285.8M362.8 285.8L357.1 288.4M357.1 288.4L354.7 294.2M354.7 294.2L357.5 298.9M353.9 303.1L348.9 300.9M349.3 295.5L354.7 294.2M362.8 285.8L361.2 291.8M361.2 291.8L366.4 296.4M366.4 296.4L366.3 304.2M366.3 304.2L372.2 310.0M372.2 310.0L367.8 312.3M367.8 312.3L367.4 315.0M372.2 310.0L369.8 317.4M369.8 317.4L374.4 322.2M374.4 322.2L371.5 323.5M265.0 275.7L264.6 283.7M264.6 283.7L268.5 281.1M268.5 281.1L268.5 276.4M268.5 276.4L264.6 274.2M264.6 274.2L264.5 269.7M264.5 269.7L268.4 267.4M268.4 267.4L272.3 269.6M272.3 269.6L272.3 274.1M272.3 274.1L268.5 276.4M264.6 283.7L269.3 287.5M269.3 287.5L263.2 289.4M263.2 289.4L262.6 295.8M269.3 287.5L268.1 291.4M266.9 295.4L261.5 292.4M266.9 295.4L259.3 299.1M259.3 299.1L262.2 303.8M259.3 299.1L257.4 306.0M257.4 306.0L254.4 307.2M251.4 308.4L250.9 314.6M250.9 314.6L253.4 314.4M250.9 314.6L245.6 317.8M245.6 317.8L245.6 320.9M245.5 323.9L239.7 328.1M239.7 328.1L243.5 331.3M243.5 331.3L247.9 329.0M247.9 329.0L248.0 324.2M248.0 324.2L252.2 321.9M252.2 321.9L256.3 324.4M256.3 324.4L256.2 329.2M256.2 329.2L252.0 331.5M252.0 331.5L247.9 329.0M239.7 328.1L239.5 319.7M239.5 319.7L236.5 321.2M239.5 319.7L245.1 317.4M132.4 164.5L127.2 160.2M127.2 160.2L129.4 158.3M127.2 160.2L121.0 162.8M121.0 162.8L114.0 159.8M114.0 159.8L116.9 158.1M119.8 156.5L127.4 159.0M127.4 159.0L122.8 162.2M122.8 162.2L119.8 161.5M127.4 159.0L133.9 153.8M133.9 153.8L129.2 151.0M397.9 193.9L391.8 195.7M391.8 195.7L388.6 202.2M388.6 202.2L394.8 202.9M394.8 202.9L397.7 208.4M388.6 202.2L382.1 202.3M382.1 202.3L378.0 196.1M378.0 196.1L376.6 198.6M378.0 196.1L370.9 194.9M370.9 194.9L374.7 190.5M370.9 194.9L369.2 188.4M369.2 188.4L375.7 189.8M375.7 189.8L376.9 193.2M378.1 196.6L380.4 194.6M361.3 246.0L354.7 244.4M354.7 244.4L350.6 249.4M350.6 249.4L343.4 249.5M343.4 249.5L340.4 254.7M340.4 254.7L333.2 256.2M333.2 256.2L330.6 262.0M330.6 262.0L322.2 262.1M322.2 262.1L324.0 259.4M322.2 262.1L316.4 268.4M316.4 268.4L321.1 270.9M321.1 270.9L321.6 276.1M316.4 268.4L319.0 275.6M319.0 275.6L315.4 280.6M315.4 280.6L307.3 279.5M218.8 78.2L224.8 73.9M224.8 73.9L222.2 71.8M224.8 73.9L233.0 75.7M233.0 75.7L228.8 79.2M228.8 79.2L225.8 79.0M233.0 75.7L235.7 72.7M238.4 69.8L245.3 70.9M245.3 70.9L249.4 76.9M376.1 314.2L373.2 306.2M373.2 306.2L366.9 304.8M366.9 304.8L369.4 299.3M366.9 304.8L365.0 296.9M365.0 296.9L358.0 294.8M358.0 294.8L355.7 288.9M355.7 288.9L361.7 287.7M361.7 287.7L365.9 292.1M355.7 288.9L359.8 283.3M359.8 283.3L353.9 283.0M353.9 283.0L352.2 285.8M278.1 170.7L276.9 178.0M276.9 178.0L280.3 180.1M283.8 182.2L284.0 179.4M283.8 182.2L283.5 185.6M283.2 189.0L280.1 188.6M283.2 189.0L288.8 194.3M288.8 194.3L287.6 198.2M286.4 202.1L291.3 207.4M291.3 207.4L287.7 214.7M287.7 214.7L292.8 216.0M292.8 216.0L297.4 213.5M287.7 214.7L291.5 222.2M375.5 232.1L374.9 226.0M374.9 226.0L367.7 223.4M367.7 223.4L365.7 217.3M365.7 217.3L370.5 212.9M370.5 212.9L367.8 212.5M370.5 212.9L376.9 215.6M404.3 296.6L398.1 292.0M398.1 292.0L397.0 298.3M397.0 298.3L393.5 298.9M398.1 292.0L394.6 292.9M391.1 293.8L384.6 289.0M384.6 289.0L378.6 290.6M378.6 290.6L377.6 294.6M376.7 298.6L371.3 301.4M371.3 301.4L375.4 303.8M375.4 303.8L380.0 302.4M371.3 301.4L372.0 308.9M372.0 308.9L376.4 307.5M376.4 307.5L378.3 303.3M378.3 303.3L375.5 298.4M379.3 294.2L384.4 296.5M383.8 302.1L378.3 303.3M372.0 308.9L365.6 312.9M365.6 312.9L366.5 319.2M366.5 319.2L372.3 322.2M372.3 322.2L374.4 317.9M374.4 317.9L377.0 317.6M345.8 304.3L352.7 303.8M352.7 303.8L357.4 297.7M357.4 297.7L364.8 297.0M364.8 297.0L366.8 289.7M366.8 289.7L361.9 288.8M361.9 288.8L360.1 286.7M366.8 289.7L373.6 288.8M373.6 288.8L378.1 295.9M378.1 295.9L381.5 291.8M381.5 291.8L381.1 288.9M378.1 295.9L373.8 303.0M373.8 303.0L376.0 309.1M376.0 309.1L371.0 314.4M371.0 314.4L371.1 318.5M371.3 322.7L364.9 325.8M364.9 325.8L365.6 333.3M365.6 333.3L359.3 333.6M359.3 333.6L356.6 339.4M356.6 339.4L359.0 342.7M359.0 342.7L357.3 346.4M357.3 346.4L353.2 346.8M353.2 346.8L350.9 343.5M350.9 343.5L352.6 339.8M352.6 339.8L356.6 339.4M280.8 225.4L274.1 226.7M274.1 226.7L270.0 233.7M270.0 233.7L268.6 231.5M270.0 233.7L263.8 233.2M263.8 233.2L264.0 230.6M263.8 233.2L259.4 239.2M259.4 239.2L264.8 240.8M264.8 240.8L266.5 246.3M259.4 239.2L255.2 238.6M251.1 237.9L247.7 243.8M247.7 243.8L244.2 243.9M326.5 302.9L330.7 297.3M330.7 297.3L338.9 296.6M338.9 296.6L341.8 299.2M344.8 301.9L352.6 300.3M352.6 300.3L355.8 293.4M355.8 293.4L362.4 291.7M362.4 291.7L361.0 296.3M361.0 296.3L362.5 298.4M429.2 183.2L427.0 175.6M427.0 175.6L419.3 174.8M419.3 174.8L420.0 169.0M420.0 169.0L425.6 167.1M419.3 174.8L415.1 168.1M415.1 168.1L411.9 167.9M408.6 167.7L408.8 170.7M408.6 167.7L405.1 160.3M405.1 160.3L397.2 159.1M397.2 159.1L393.0 152.1M171.5 113.7L178.8 114.2M178.8 114.2L177.3 116.5M178.8 114.2L184.3 109.1M184.3 109.1L191.2 109.7M191.2 109.7L187.6 104.4M187.6 104.4L184.2 105.0M191.2 109.7L195.4 103.6M195.4 103.6L203.4 103.1M203.4 103.1L205.6 97.4M205.6 97.4L212.9 96.7M212.9 96.7L216.1 91.4M216.1 91.4L210.5 88.6M210.5 88.6L210.0 85.2M216.1 91.4L214.8 88.0M213.5 84.6L219.7 86.5M219.7 86.5L221.2 92.8M339.2 316.9L332.1 314.2M332.1 314.2L331.3 317.6M332.1 314.2L326.3 319.1M326.3 319.1L318.9 317.9M318.9 317.9L316.5 320.2M314.1 322.5L310.6 321.8M307.0 321.1L305.4 317.9M303.8 314.7L306.5 314.9M303.8 314.7L297.7 313.5M456.3 248.0L453.8 240.0M453.8 240.0L450.1 238.8M446.4 237.6L445.7 229.2M445.7 229.2L438.9 227.0M438.9 227.0L437.6 220.7M437.6 220.7L443.3 222.5M437.6 220.7L442.5 216.9M442.5 216.9L443.3 220.1M442.5 216.9L442.7 208.6M442.7 208.6L448.8 208.8M448.8 208.8L452.5 204.0M284.2 178.6L290.8 173.4M290.8 173.4L290.9 176.3M290.8 173.4L290.1 170.4M289.4 167.4L287.2 168.7M289.4 167.4L294.8 161.4M294.8 161.4L292.3 160.8M294.8 161.4L293.5 153.4M293.5 153.4L298.4 148.4M364.0 262.6L366.8 256.5M366.8 256.5L361.9 250.2M361.9 250.2L361.0 253.3M361.9 250.2L363.0 243.0M363.0 243.0L357.1 239.1M357.1 239.1L359.4 236.8M357.1 239.1L351.3 240.6M391.5 260.8L393.0 258.0M394.4 255.1L389.4 249.6M389.4 249.6L390.7 242.5M390.7 242.5L397.8 239.7M397.8 239.7L392.6 235.8M392.6 235.8L392.9 229.4M392.9 229.4L388.8 226.8M388.8 226.8L389.0 222.0M389.0 222.0L393.2 219.8M393.2 219.8L397.3 222.3M397.3 222.3L397.1 227.1M397.1 227.1L392.9 229.4M397.8 239.7L397.6 233.0M397.6 233.0L403.5 230.0M221.8 287.5L214.8 291.3M214.8 291.3L215.2 288.8M214.8 291.3L215.0 297.4M215.0 297.4L210.0 294.8M210.0 294.8L207.1 296.0M215.0 297.4L221.6 301.4M221.6 301.4L223.9 297.2M223.9 297.2L228.6 296.7M221.6 301.4L222.3 308.4M222.3 308.4L229.8 310.4M229.8 310.4L231.7 317.4M231.7 317.4L238.9 319.4M323.7 174.0L320.2 168.5M320.2 168.5L312.0 168.3M312.0 168.3L312.1 171.5M312.0 168.3L310.2 171.4M308.4 174.5L304.6 173.9M300.9 173.3L297.2 178.3M297.2 178.3L289.4 177.9M289.4 177.9L290.3 171.7M290.3 171.7L293.4 170.2M114.4 216.6L118.6 221.1M118.6 221.1L126.9 220.7M126.9 220.7L125.6 224.0M126.9 220.7L130.4 214.1M130.4 214.1L137.2 212.1M137.2 212.1L135.3 206.9M135.3 206.9L132.6 205.5M137.2 212.1L139.1 205.7M139.1 205.7L145.2 204.8M145.2 204.8L143.9 208.1M145.2 204.8L147.3 196.7M147.3 196.7L153.4 194.4M153.4 194.4L155.1 187.5M155.1 187.5L149.7 183.6M149.7 183.6L148.9 186.7M149.7 183.6L148.7 177.0M348.0 318.9L355.9 315.9M355.9 315.9L358.0 308.8M358.0 308.8L363.6 311.0M363.6 311.0L366.1 308.8M358.0 308.8L356.4 306.0M354.8 303.2L349.8 306.7M349.8 306.7L346.8 305.3M354.8 303.2L358.8 297.1M358.8 297.1L355.4 296.8M358.8 297.1L355.7 289.4M355.7 289.4L348.4 286.7M348.4 286.7L348.3 280.6M348.3 280.6L343.4 281.3M343.4 281.3L339.2 278.6M348.3 280.6L342.6 277.0M167.5 95.7L170.8 102.2M170.8 102.2L177.0 103.5M177.0 103.5L180.0 109.3M180.0 109.3L187.8 111.1M187.8 111.1L188.9 114.2M190.0 117.3L185.2 118.0M185.2 118.0L183.7 122.6M190.0 117.3L197.9 117.8M197.9 117.8L199.8 123.7M199.8 123.7L205.8 125.1M205.8 125.1L202.8 130.2M202.8 130.2L199.5 130.1M205.8 125.1L211.3 119.2M211.3 119.2L218.9 120.5M218.9 120.5L217.0 122.8M366.8 371.8L366.4 363.5M366.4 363.5L370.8 366.7M370.8 366.7L371.4 369.6M366.4 363.5L361.1 359.4M361.1 359.4L362.3 352.2M362.3 352.2L356.3 354.3M356.3 354.3L353.2 352.5M362.3 352.2L355.7 347.9M355.7 347.9L356.4 341.6M356.4 341.6L350.6 335.7M350.6 335.7L349.2 338.2M350.6 335.7L344.4 336.6M344.4 336.6L341.5 334.1M338.7 331.6L339.4 323.8M339.4 323.8L344.7 325.7M344.7 325.7L348.4 321.5M339.4 323.8L333.6 319.7M333.6 319.7L332.1 325.9M333.6 319.7L329.6 321.1M287.3 125.4L288.9 133.1M288.9 133.1L294.7 136.4M294.7 136.4L295.6 143.0M295.6 143.0L292.5 143.2M295.6 143.0L302.7 147.3M302.7 147.3L300.2 148.3M302.7 147.3L304.1 154.6M304.1 154.6L311.6 158.0M311.6 158.0L311.6 153.0M311.6 153.0L315.3 149.6M311.6 158.0L313.1 164.0M313.1 164.0L318.5 161.1M318.5 161.1L320.5 155.3M313.1 164.0L317.0 164.8M321.0 165.6L321.7 161.0M321.7 161.0L325.5 158.3M321.0 165.6L323.4 173.1M323.4 173.1L318.2 174.4M318.2 174.4L317.4 177.2M323.4 173.1L327.1 173.5M312.9 396.5L306.3 401.3M306.3 401.3L303.7 395.9M303.7 395.9L304.8 392.7M306.3 401.3L308.1 393.9M308.1 393.9L305.0 394.0M308.1 393.9L314.6 391.7M314.6 391.7L317.8 393.5M321.1 395.4L321.9 392.6M321.1 395.4L313.6 396.5M157.5 295.1L165.9 295.3M165.9 295.3L164.3 297.2M165.9 295.3L169.9 289.1M169.9 289.1L173.0 288.7M176.2 288.3L174.5 293.8M176.2 288.3L180.7 282.2M180.7 282.2L179.0 275.4M179.0 275.4L182.7 270.3M182.7 270.3L180.2 269.4M182.7 270.3L179.5 264.9M179.5 264.9L177.2 270.1M177.2 270.1L181.1 274.2M179.5 264.9L171.7 264.9M144.7 113.1L151.1 115.6M151.1 115.6L147.8 118.9M151.1 115.6L157.6 110.4M157.6 110.4L163.0 113.4M163.0 113.4L170.0 108.9M170.0 108.9L167.9 106.5M170.0 108.9L175.9 110.5M175.9 110.5L181.5 104.5M208.4 206.3L214.5 206.0M214.5 206.0L213.4 203.4M214.5 206.0L215.8 203.2M217.1 200.3L219.6 202.0M217.1 200.3L223.5 198.3M223.5 198.3L224.2 201.0M223.5 198.3L224.1 191.7M224.1 191.7L221.6 193.2M224.1 191.7L229.4 188.1M229.4 188.1L236.8 191.2M298.1 388.1L292.4 385.4M292.4 385.4L297.7 382.7M297.7 382.7L300.7 384.3M292.4 385.4L284.5 388.5M284.5 388.5L279.0 385.4M279.0 385.4L272.8 390.4M272.8 390.4L270.6 384.5M272.8 390.4L268.9 389.2M265.0 387.9L262.5 380.2M262.5 380.2L266.0 374.0M266.0 374.0L263.6 366.1M263.6 366.1L266.2 367.0M263.6 366.1L267.5 359.2M208.7 215.7L216.3 218.3M216.3 218.3L216.9 215.6M216.3 218.3L220.9 214.1M220.9 214.1L227.7 216.8M227.7 216.8L229.0 211.8M229.0 211.8L226.4 207.2M227.7 216.8L233.5 211.1M233.5 211.1L239.8 212.9M239.8 212.9L234.9 217.0M234.9 217.0L235.0 220.5M239.8 212.9L245.0 207.7M245.0 207.7L242.7 201.1M242.7 201.1L248.7 195.3M248.7 195.3L246.5 188.3M246.5 188.3L249.1 189.1M417.7 275.6L410.4 275.7M410.4 275.7L407.3 283.3M407.3 283.3L402.4 281.1M407.3 283.3L399.5 286.2M399.5 286.2L404.6 290.1M404.6 290.1L410.8 288.8M410.8 288.8L412.8 284.2M417.7 284.8L418.8 289.6M414.5 292.1L410.8 288.8M399.5 286.2L396.4 293.6M396.4 293.6L394.3 291.6M396.4 293.6L389.7 295.4M389.7 295.4L386.5 301.7M420.8 227.4L421.3 234.2M421.3 234.2L427.0 237.3M427.0 237.3L427.9 240.8M428.7 244.3L422.9 244.1M422.9 244.1L421.1 241.4M428.7 244.3L434.5 247.8M434.5 247.8L434.9 255.5M434.9 255.5L432.3 254.9M434.9 255.5L441.1 260.9M441.1 260.9L436.4 264.1M436.4 264.1L436.4 269.8M441.1 260.9L441.1 267.4M441.1 267.4L437.7 267.2M441.1 267.4L443.6 269.4M446.0 271.5L443.9 278.1M443.9 278.1L446.9 277.7M443.9 278.1L440.6 270.8M440.6 270.8L445.6 265.3M445.6 265.3L440.5 263.0M445.6 265.3L449.6 265.7M183.3 264.5L187.3 271.0M187.3 271.0L184.4 272.3M187.3 271.0L194.3 271.1M194.3 271.1L197.2 276.5M197.2 276.5L194.8 277.5M197.2 276.5L204.1 276.8M204.1 276.8L203.8 273.7M204.1 276.8L207.5 269.3M207.5 269.3L215.2 267.6M276.8 266.6L276.1 258.8M276.1 258.8L269.8 256.6M269.8 256.6L267.6 248.9M267.6 248.9L270.8 248.3M267.6 248.9L273.4 243.5M273.4 243.5L273.5 237.2M273.5 237.2L269.5 239.9M269.5 239.9L265.1 237.8M273.5 237.2L278.4 233.2M278.4 233.2L277.7 227.2M277.7 227.2L282.9 229.2M282.9 229.2L285.5 227.5M277.7 227.2L283.4 223.9M283.4 223.9L284.3 215.9M284.3 215.9L287.2 216.6M284.3 215.9L290.1 212.6M290.1 212.6L291.3 218.5M291.3 218.5L296.4 221.7M296.4 221.7L301.4 219.7M304.9 223.9L302.1 228.4M296.8 227.1L296.4 221.7M290.1 212.6L290.7 209.2M291.2 205.8L293.6 208.0M291.2 205.8L298.9 203.6M248.2 145.3L250.1 137.7M250.1 137.7L252.0 139.4M250.1 137.7L246.4 132.2M246.4 132.2L250.9 125.9M250.9 125.9L251.9 128.4M250.9 125.9L249.4 118.6M249.4 118.6L243.9 121.2M243.9 121.2L240.7 120.1M249.4 118.6L253.1 113.4M253.1 113.4L249.3 106.1M249.3 106.1L255.1 103.4M255.1 103.4L258.2 105.0M249.3 106.1L253.6 99.4M253.6 99.4L257.1 99.5M260.5 99.5L263.5 93.1M263.5 93.1L270.1 91.6M270.1 91.6L268.2 85.9M268.2 85.9L262.2 84.9M270.1 91.6L273.0 86.3M273.0 86.3L270.5 85.6M273.0 86.3L281.3 87.0M261.4 289.9L261.7 298.1M261.7 298.1L264.2 297.3M261.7 298.1L268.1 303.0M268.1 303.0L262.6 304.7M262.6 304.7L261.0 310.3M268.1 303.0L275.7 300.2M275.7 300.2L278.3 302.3M280.9 304.3L289.1 302.9M289.1 302.9L294.0 309.0M294.0 309.0L297.2 303.5M297.2 303.5L295.8 297.3M294.0 309.0L300.6 309.6M300.6 309.6L298.6 312.2M300.6 309.6L302.4 315.8M302.4 315.8L299.5 315.8M251.8 287.8L259.8 288.4M259.8 288.4L261.8 285.8M263.9 283.1L258.8 280.4M258.8 280.4L259.3 277.3M263.9 283.1L271.8 284.2M271.8 284.2L269.7 278.8M271.8 284.2L276.6 279.3M276.6 279.3L274.0 272.4M274.0 272.4L279.0 271.2M279.0 271.2L279.7 268.5M274.0 272.4L276.2 268.8M371.6 159.5L373.0 153.5M373.0 153.5L378.1 156.2M378.1 156.2L378.2 159.4M373.0 153.5L371.0 159.7M371.0 159.7L375.4 165.5M375.4 165.5L380.3 161.7M380.3 161.7L386.0 164.0M386.0 164.0L389.3 161.5M389.3 161.5L393.0 163.1M393.0 163.1L393.6 167.1M393.6 167.1L390.4 169.6M390.4 169.6L386.6 168.1M386.6 168.1L386.0 164.0M375.4 165.5L372.1 172.1M372.1 172.1L377.4 172.8M377.4 172.8L380.0 168.0M372.1 172.1L375.4 179.3M375.4 179.3L371.2 186.1M371.2 186.1L374.5 185.6M371.2 186.1L374.6 192.6M374.6 192.6L376.2 189.5M374.6 192.6L369.7 198.3M369.7 198.3L373.2 205.3M373.2 205.3L370.5 212.8M370.5 212.8L374.2 220.4M347.8 356.2L344.8 361.6M344.8 361.6L348.2 361.3M344.8 361.6L337.9 361.2M337.9 361.2L338.5 365.7M338.5 365.7L343.0 366.8M337.9 361.2L334.2 368.2M334.2 368.2L340.5 369.3M340.5 369.3L344.9 364.6M344.9 364.6L343.7 360.5M343.7 360.5L346.5 357.4M346.5 357.4L350.6 358.4M350.6 358.4L351.9 362.4M351.9 362.4L349.0 365.5M349.0 365.5L344.9 364.6M334.2 368.2L327.0 369.1M327.0 369.1L327.3 371.6M327.0 369.1L323.2 375.4M323.2 375.4L316.3 374.5M316.3 374.5L312.8 380.7M312.8 380.7L309.9 376.3M309.9 376.3L311.5 373.9M312.8 380.7L305.7 380.0M387.3 343.3L381.9 346.8M381.9 346.8L382.3 354.5M382.3 354.5L378.9 356.5M375.6 358.5L374.2 352.5M374.2 352.5L371.1 351.0M375.6 358.5L374.7 364.6M374.7 364.6L372.1 362.7M374.7 364.6L369.1 368.7M369.1 368.7L371.8 370.2M369.1 368.7L369.9 365.4M370.7 362.0L377.6 358.5M377.6 358.5L378.5 350.4M378.5 350.4L375.7 351.4M378.5 350.4L371.4 346.8M371.4 346.8L375.3 344.2M375.3 344.2L379.9 345.0M379.9 345.0L382.9 341.4M382.9 341.4L387.5 342.2M387.5 342.2L389.1 346.7M389.1 346.7L386.1 350.3M386.1 350.3L381.5 349.4M381.5 349.4L379.9 345.0M371.4 346.8L371.1 339.5M300.1 106.5L307.6 109.4M307.6 109.4L301.4 106.7M301.4 106.7L302.8 112.9M302.8 112.9L301.0 116.0M301.4 106.7L300.5 100.0M300.5 100.0L295.7 101.0M295.7 101.0L293.5 99.6M300.5 100.0L294.6 97.1M294.6 97.1L295.3 90.7M295.3 90.7L288.3 86.2M288.3 86.2L283.4 81.4M283.4 81.4L286.0 80.4M174.6 326.0L178.9 319.8M391.8 187.5L385.0 185.8M385.0 185.8L380.2 190.3M380.2 190.3L379.3 185.1M379.3 185.1L381.8 183.6M380.2 190.3L382.3 195.9M382.3 195.9L377.3 197.6M377.3 197.6L373.0 194.5M382.3 195.9L379.4 201.8M379.4 201.8L382.7 209.1M382.7 209.1L377.7 214.6M377.7 214.6L370.1 213.6M370.1 213.6L371.7 207.9M371.7 207.9L374.8 206.8M354.2 364.9L351.9 358.3M351.9 358.3L348.6 357.0M345.3 355.7L344.3 358.8M345.3 355.7L345.1 347.2M345.1 347.2L348.1 347.8M345.1 347.2L339.4 345.0M339.4 345.0L341.0 350.4M341.0 350.4L338.6 355.5M339.4 345.0L337.9 339.1M337.9 339.1L334.6 343.1M337.9 339.1L332.0 335.5M332.0 335.5L331.6 328.4M331.6 328.4L329.1 328.6M331.6 328.4L325.7 326.0M325.7 326.0L323.7 319.8M323.7 319.8L321.8 321.9M323.7 319.8L317.2 317.8M199.7 181.2L205.1 184.2M205.1 184.2L212.0 179.9M212.0 179.9L211.6 182.9M212.0 179.9L214.8 181.7M217.7 183.5L224.6 178.8M224.6 178.8L225.8 182.1M224.6 178.8L222.9 171.2M222.9 171.2L218.6 174.9M218.6 174.9L213.1 173.7M213.1 173.7L210.3 176.8M210.3 176.8L206.3 176.0M206.3 176.0L204.9 172.1M204.9 172.1L207.7 168.9M207.7 168.9L211.8 169.8M211.8 169.8L213.1 173.7M222.9 171.2L227.8 166.2M227.8 166.2L226.8 163.4M225.7 160.6L222.5 165.2M222.5 165.2L217.1 166.2M217.1 166.2L215.4 170.8M215.4 170.8L210.6 171.7M210.6 171.7L207.4 168.0M207.4 168.0L209.1 163.4M209.1 163.4L213.9 162.5M213.9 162.5L217.1 166.2M225.7 160.6L231.1 155.7M231.1 155.7L232.1 158.8M231.1 155.7L231.2 147.3M231.2 147.3L237.2 143.4M237.2 143.4L235.4 141.5M237.2 143.4L236.2 135.2M236.2 135.2L233.3 137.0M236.2 135.2L241.3 131.6M192.1 89.8L188.7 84.3M188.7 84.3L182.2 84.5M182.2 84.5L182.3 81.2M182.2 84.5L177.6 91.1M177.6 91.1L175.3 88.7M177.6 91.1L171.0 90.5M171.0 90.5L173.0 94.6M173.0 94.6L177.5 95.2M171.0 90.5L167.6 96.8M167.6 96.8L165.2 92.1M165.2 92.1L162.3 92.2M167.6 96.8L170.6 102.8M170.6 102.8L172.9 101.0M405.4 192.1L399.7 188.6M399.7 188.6L393.7 192.2M393.7 192.2L389.8 191.2M386.0 190.2L382.2 195.4M382.2 195.4L375.7 195.3M375.7 195.3L372.4 202.2M372.4 202.2L370.1 199.7M372.4 202.2L366.5 203.7M366.5 203.7L363.7 211.1M363.7 211.1L357.6 211.2M357.6 211.2L353.6 217.4M353.6 217.4L346.0 219.0M346.0 219.0L346.4 214.1M346.4 214.1L350.3 211.3M346.0 219.0L343.9 226.4M343.9 226.4L346.4 225.6M206.8 189.4L210.7 184.4M210.7 184.4L206.0 181.8M206.0 181.8L201.0 183.8M201.0 183.8L199.6 189.0M194.2 189.4L192.2 184.3M196.4 180.8L201.0 183.8M210.7 184.4L217.4 185.8M217.4 185.8L224.0 181.1M224.0 181.1L222.2 178.9M224.0 181.1L227.0 182.1M230.0 183.0L231.3 191.1M231.3 191.1L234.6 187.9M234.6 187.9L239.1 187.8M213.1 161.6L214.2 158.0M215.3 154.4L212.6 155.0M215.3 154.4L211.7 148.9M211.7 148.9L214.9 142.1M214.9 142.1L210.8 137.2M210.8 137.2L214.5 131.1M214.5 131.1L217.7 135.1M214.5 131.1L210.7 124.5M210.7 124.5L215.3 124.6M215.3 124.6L218.0 120.9M210.7 124.5L211.9 120.8M213.0 117.0L207.2 117.3M207.2 117.3L203.1 113.2M203.1 113.2L198.6 114.4M198.6 114.4L195.4 111.2M195.4 111.2L196.5 106.7M196.5 106.7L201.0 105.5M201.0 105.5L204.2 108.7M204.2 108.7L203.1 113.2M445.1 168.9L445.1 175.5M445.1 175.5L440.9 172.5M445.1 175.5L445.6 168.0M314.8 115.8L312.0 121.1M312.0 121.1L314.5 121.2M312.0 121.1L315.4 127.2M315.4 127.2L317.3 124.5M315.4 127.2L311.5 132.3M311.5 132.3L316.1 135.5M316.1 135.5L321.1 133.1M311.5 132.3L314.5 138.9M314.5 138.9L310.4 145.6M310.4 145.6L315.4 145.8M310.4 145.6L302.2 146.1M302.2 146.1L304.2 152.1M304.2 152.1L302.5 155.2M302.2 146.1L299.5 153.7M299.5 153.7L302.0 153.8M299.5 153.7L304.1 160.2M304.1 160.2L298.5 161.5M304.1 160.2L302.5 167.3M302.5 167.3L296.9 165.9M302.5 167.3L297.0 170.2M297.0 170.2L301.2 172.0M297.0 170.2L297.6 176.5M95.4 212.1L89.0 213.4M89.0 213.4L94.2 209.5M94.2 209.5L101.1 213.3M101.1 213.3L108.7 210.3M108.7 210.3L114.0 216.0M114.0 216.0L115.1 210.6M115.1 210.6L110.8 207.1M114.0 216.0L121.4 214.6M121.4 214.6L118.5 220.0M118.5 220.0L112.4 220.8M112.4 220.8L109.6 225.8M104.0 224.7L103.3 219.0M108.5 216.6L112.4 220.8M121.4 214.6L126.5 219.9M126.5 219.9L133.4 220.0M133.4 220.0L136.7 225.9M342.5 309.4L335.6 308.1M335.6 308.1L337.7 303.5M337.7 303.5L342.7 303.6M335.6 308.1L331.6 313.6M331.6 313.6L324.0 311.6M324.0 311.6L323.2 317.6M324.0 311.6L319.7 316.9M319.7 316.9L317.9 314.2M319.7 316.9L311.3 316.4M311.3 316.4L308.0 322.3M308.0 322.3L302.0 321.5M302.0 321.5L298.4 326.6M191.2 140.9L187.6 133.4M187.6 133.4L184.7 138.3M187.6 133.4L181.2 132.3M181.2 132.3L176.1 138.7M176.1 138.7L179.4 139.4M176.1 138.7L172.2 138.2M168.3 137.7L164.6 142.7M164.6 142.7L170.8 142.4M170.8 142.4L173.0 139.9M164.6 142.7L160.9 142.7M157.1 142.7L154.7 149.0M154.7 149.0L148.5 149.4M148.5 149.4L149.0 146.8M148.5 149.4L145.6 154.8M145.6 154.8L142.0 151.0M142.0 151.0L139.1 151.1M381.8 233.9L375.7 231.0M375.7 231.0L371.4 235.2M371.4 235.2L377.3 236.7M377.3 236.7L379.7 234.5M371.4 235.2L365.4 233.7M365.4 233.7L361.7 238.7M361.7 238.7L357.8 238.5M353.8 238.3L354.5 240.7M353.8 238.3L348.6 244.8M348.6 244.8L341.4 243.4M341.4 243.4L336.1 249.1M336.1 249.1L330.2 247.8M330.2 247.8L327.7 249.6M325.2 251.4L317.7 248.0M317.7 248.0L320.0 246.0M173.0 150.8L177.5 157.9M177.5 157.9L172.3 158.0M172.3 158.0L170.2 156.2M177.5 157.9L184.0 158.6M184.0 158.6L183.1 155.2M184.0 158.6L186.5 165.9M186.5 165.9L189.5 162.0M189.5 162.0L188.1 159.6M186.5 165.9L194.3 167.5M194.3 167.5L195.5 170.9M196.7 174.3L203.0 174.6M203.0 174.6L200.7 169.1M203.0 174.6L207.2 170.0M207.2 170.0L204.6 168.6M152.8 279.5L155.8 280.6M158.8 281.6L155.1 286.8M155.1 286.8L155.9 290.2M158.8 281.6L164.4 276.1M164.4 276.1L170.4 278.1M170.4 278.1L176.1 273.7M176.1 273.7L182.4 276.3M182.4 276.3L186.7 272.0M186.7 272.0L185.7 265.0M320.4 383.6L317.6 376.7M317.6 376.7L322.6 377.9M322.6 377.9L325.4 382.1M325.4 382.1L330.4 381.8M330.4 381.8L333.2 385.9M333.2 385.9L331.0 390.4M331.0 390.4L326.0 390.7M326.0 390.7L323.2 386.6M323.2 386.6L325.4 382.1M317.6 376.7L310.2 376.6M310.2 376.6L313.9 371.7M313.9 371.7L312.4 365.9M312.4 365.9L308.1 364.1M308.4 359.4L313.0 358.2M315.5 362.2L312.4 365.9M310.2 376.6L308.2 373.4M306.2 370.2L307.8 366.4M309.3 362.6L306.1 356.5M306.1 356.5L303.0 356.6M327.6 304.4L321.8 308.7M321.8 308.7L323.2 315.3M323.2 315.3L327.8 313.2M327.8 313.2L329.8 315.2M323.2 315.3L318.1 318.6M318.1 318.6L320.1 320.3M318.1 318.6L319.2 324.8M319.2 324.8L312.2 328.9M312.2 328.9L305.9 325.5M308.2 200.0L301.2 200.9M301.2 200.9L303.4 206.8M303.4 206.8L302.1 210.0M301.2 200.9L295.5 195.3M295.5 195.3L291.8 196.2M288.1 197.1L282.9 193.4M282.9 193.4L283.4 186.2M283.4 186.2L277.1 181.4M277.1 181.4L282.4 179.5M282.4 179.5L283.1 176.5M277.1 181.4L276.9 175.0M276.9 175.0L271.5 171.3M271.5 171.3L276.2 167.2M276.2 167.2L282.2 169.0M282.2 169.0L286.1 165.9M290.2 168.7L288.8 173.5M283.9 173.6L282.2 169.0M271.5 171.3L271.0 167.4M270.5 163.6L263.9 159.9M263.9 159.9L261.0 165.1M261.0 165.1L255.1 165.2M255.1 165.2L252.8 169.4M252.8 169.4L248.0 169.5M248.0 169.5L245.6 165.4M245.6 165.4L247.9 161.2M247.9 161.2L252.6 161.1M252.6 161.1L255.1 165.2M179.4 143.5L182.6 138.3M182.6 138.3L179.4 137.6M182.6 138.3L179.0 130.7M179.0 130.7L184.5 129.4M184.5 129.4L187.3 124.5M187.3 124.5L185.2 120.8M185.2 120.8L187.3 117.1M187.3 117.1L191.7 117.1M191.7 117.1L193.8 120.9M193.8 120.9L191.6 124.6M191.6 124.6L187.3 124.5M179.0 130.7L182.5 125.1M182.5 125.1L179.6 119.2M179.6 119.2L186.0 118.5M186.0 118.5L188.2 112.5M179.6 119.2L184.0 112.5M184.0 112.5L181.7 106.9M181.7 106.9L174.7 105.4M174.7 105.4L172.7 102.2M170.7 98.9L173.7 99.3M170.7 98.9L167.3 99.2M384.7 236.5L388.7 236.8M392.6 237.2L395.7 243.1M395.7 243.1L401.8 242.7M401.8 242.7L404.9 248.3M404.9 248.3L402.0 249.1M404.9 248.3L408.6 247.9M412.4 247.5L416.2 252.9M416.2 252.9L413.0 260.5M413.0 260.5L415.8 266.5M415.8 266.5L417.1 263.9M415.8 266.5L410.4 272.0M410.4 272.0L408.7 269.8M316.8 185.7L324.6 188.3M324.6 188.3L329.3 183.9M329.3 183.9L330.0 186.5M329.3 183.9L337.8 184.9M337.8 184.9L339.7 191.8M339.7 191.8L343.2 188.9M339.7 191.8L346.9 194.0M346.9 194.0L348.6 199.9M348.6 199.9L354.3 203.0M354.3 203.0L353.2 210.9M353.2 210.9L347.1 209.1M353.2 210.9L355.9 213.2M358.5 215.4L356.0 216.0M296.4 393.5L299.9 392.7M303.4 391.8L309.9 396.6M309.9 396.6L315.5 393.9M315.5 393.9L315.5 398.9M315.5 393.9L320.9 398.8M320.9 398.8L318.1 400.7M320.9 398.8L313.4 401.7M313.4 401.7L317.2 405.8M313.4 401.7L308.1 395.7M308.1 395.7L311.9 388.1M315.3 193.2L308.7 191.2M308.7 191.2L302.7 196.7M302.7 196.7L305.2 198.7M302.7 196.7L295.1 193.3M295.1 193.3L291.6 195.6M288.2 197.8L288.1 206.2M288.1 206.2L285.6 205.0M288.1 206.2L282.6 210.4M282.6 210.4L282.7 204.0M282.7 204.0L288.2 200.9M288.2 200.9L288.9 195.3M294.5 194.2L297.2 199.1M293.4 203.3L288.2 200.9M282.6 210.4L284.2 218.1M284.2 218.1L279.4 216.5M279.4 216.5L278.5 213.8M284.2 218.1L279.2 224.2M279.2 224.2L282.0 231.6M282.0 231.6L277.3 232.8M282.0 231.6L277.4 235.6M277.4 235.6L275.6 230.5M275.6 230.5L277.9 228.6M367.8 256.2L365.4 250.6M365.4 250.6L359.5 249.0M359.5 249.0L360.1 252.2M359.5 249.0L357.0 241.7M357.0 241.7L354.0 243.4M357.0 241.7L350.1 240.8M350.1 240.8L351.3 243.9M350.1 240.8L348.6 234.5M241.5 254.9L247.0 249.6M247.0 249.6L245.8 242.3M245.8 242.3L239.6 239.3M239.6 239.3L240.0 242.6M239.6 239.3L233.7 242.0M233.7 242.0L235.4 245.0M233.7 242.0L227.8 237.0M227.8 237.0L224.8 238.5M221.7 240.0L221.1 236.5M221.7 240.0L215.9 234.6M215.9 234.6L218.6 233.9M215.9 234.6L208.2 237.7M208.2 237.7L209.9 232.6M209.9 232.6L215.0 231.4M215.0 231.4L216.9 227.0M221.7 227.4L222.8 232.0M218.7 234.5L215.0 231.4M208.2 237.7L200.9 233.8M200.9 233.8L195.4 237.1M136.7 131.8L139.8 126.1M139.8 126.1L148.2 126.1M148.2 126.1L147.3 129.0M148.2 126.1L153.2 131.2M153.2 131.2L150.2 132.6M153.2 131.2L150.3 137.5M150.3 137.5L153.2 143.3M153.2 143.3L149.9 143.5M153.2 143.3L150.0 149.0M257.2 274.5L265.5 275.6M265.5 275.6L270.5 268.8M270.5 268.8L277.4 268.2M277.4 268.2L276.5 265.6M277.4 268.2L280.3 260.7M280.3 260.7L286.9 260.0M286.9 260.0L288.6 253.4M288.6 253.4L284.0 248.3M284.0 248.3L286.5 246.7M284.0 248.3L286.5 241.1M286.5 241.1L293.2 240.4M293.2 240.4L296.9 233.6M296.9 233.6L305.2 233.8M305.2 233.8L304.4 236.9M295.4 306.2L300.9 302.9M300.9 302.9L298.7 300.6M300.9 302.9L301.5 295.7M301.5 295.7L296.0 293.0M296.0 293.0L295.5 285.6M295.5 285.6L289.5 281.7M289.5 281.7L289.0 277.8M288.4 273.9L280.5 271.3M228.6 283.1L234.3 285.1M234.3 285.1L241.0 280.5M241.0 280.5L246.7 283.3M246.7 283.3L250.0 281.8M253.4 280.2L257.9 284.4M257.9 284.4L265.1 281.6M265.1 281.6L271.5 286.0M271.5 286.0L272.5 282.9M271.5 286.0L274.2 284.5M276.9 283.0L274.3 279.2M274.3 279.2L271.8 279.5"/>
<path stroke="#f42808" stroke-width="1.35" d="M227.6 228.7L226.7 226.0M224.7 228.4L226.6 226.6M214.4 232.5L213.4 229.8M396.3 206.6L396.8 204.4M401.9 207.4L402.5 209.6M416.5 206.2L418.0 208.3M411.9 223.6L414.1 223.7M351.1 338.1L351.8 336.0M352.0 354.7L350.2 355.7M161.7 170.3L161.2 168.3M183.2 167.1L181.1 168.7M203.7 161.0L204.6 163.2M253.7 385.8L255.0 388.3M246.6 385.3L245.5 382.7M223.5 152.7L226.2 152.8M222.5 157.9L220.8 159.1M226.6 170.0L223.9 170.8M158.6 111.7L157.9 109.5M157.8 134.3L160.0 135.3M153.8 138.7L151.0 137.7M177.8 294.2L179.8 295.7M278.9 253.1L281.2 251.4M279.2 248.6L281.2 249.7M274.2 240.8L276.2 238.9M273.7 89.9L272.3 88.1M254.3 86.9L256.3 87.5M163.4 298.1L160.7 298.3M182.2 302.0L181.4 299.5M201.8 110.9L201.4 108.1M185.6 114.1L187.5 114.9M317.5 328.2L315.6 326.5M327.0 343.1L324.2 343.8M228.2 196.1L226.5 198.0M246.1 200.1L248.4 199.1M348.2 314.8L347.5 317.2M356.9 313.2L354.5 313.5M379.2 305.7L379.5 308.5M384.0 300.2L383.3 298.2M287.6 213.8L286.2 212.1M301.8 222.3L300.3 220.3M118.3 170.8L116.2 171.0M277.4 80.2L275.2 80.2M360.6 302.2L362.0 304.7M358.3 305.5L360.8 306.2M417.3 201.2L417.1 198.5M408.3 236.6L408.5 234.5M410.7 253.8L408.9 252.8M218.3 182.6L219.4 184.6M256.7 171.3L255.2 173.0M246.4 259.8L245.5 257.9M243.8 295.0L240.9 295.4M384.5 208.4L384.0 210.6M386.8 177.3L387.7 179.7M405.5 160.2L406.6 162.9M399.1 152.0L397.0 153.7M190.1 202.8L192.5 204.4M189.4 212.2L191.4 213.2M304.5 151.5L302.6 152.9M308.1 130.7L305.6 130.5M156.8 174.5L156.7 172.5M261.0 107.2L261.4 104.4M271.6 158.6L274.0 157.4M114.5 188.8L112.7 190.9M119.1 180.1L116.6 179.1M134.3 190.3L131.4 190.5M110.7 198.5L109.1 197.1M124.3 199.2L122.7 197.1M136.4 201.8L134.5 201.0M203.8 79.7L202.6 82.1M209.5 73.7L210.8 72.0M202.5 88.6L200.1 87.6M344.4 338.3L342.5 339.5M333.1 342.7L331.7 340.3M326.4 343.4L326.3 340.6M317.1 349.1L318.9 347.1M156.4 247.1L155.8 244.4M325.8 238.6L323.1 238.0M263.2 249.1L261.2 247.4M268.7 255.9L266.5 257.4M273.9 391.4L276.0 391.2M349.6 278.5L348.4 280.8M357.9 261.5L358.0 264.2M149.9 268.9L150.9 271.4M193.6 195.8L194.6 193.7M189.6 212.0L189.5 209.7M180.0 236.9L178.3 239.0M144.9 154.7L143.0 153.0M150.2 164.4L148.1 166.1M155.2 167.6L157.4 166.6M250.6 207.7L250.9 205.1M239.1 209.6L236.7 209.0M238.0 203.6L238.5 200.9M218.7 186.8L221.2 187.3M196.9 144.0L195.0 142.2M204.2 118.7L205.0 116.7M212.0 136.8L209.6 135.3M327.7 200.8L329.9 199.1M307.4 223.0L307.6 220.5M381.7 167.8L383.8 168.3M368.0 171.6L366.9 169.7M273.3 185.6L275.4 184.6M263.2 188.8L262.3 186.3M256.2 196.6L254.4 197.9M363.9 240.8L362.2 242.2M150.8 132.1L151.0 129.6M294.0 197.7L292.7 199.5M272.0 186.4L270.5 188.8M253.0 186.2L253.8 188.3M279.9 326.3L277.6 324.7M316.2 324.7L315.4 326.8M333.2 316.0L333.5 313.7M103.2 228.8L101.0 227.2M112.6 238.7L109.7 238.4M145.7 241.9L144.5 244.0M356.4 276.2L355.7 278.2M371.5 323.5L369.1 324.5M253.4 314.4L255.5 314.3M236.5 321.2L234.0 322.5M129.4 158.3L131.1 156.8M376.6 198.6L375.4 200.7M380.4 194.6L382.3 193.0M324.0 259.4L325.5 257.1M222.2 71.8L220.0 70.0M225.8 79.0L223.3 78.9M352.2 285.8L350.8 288.0M284.0 179.4L284.1 177.1M280.1 188.6L277.6 188.2M367.8 212.5L365.7 212.2M393.5 298.9L390.7 299.5M360.1 286.7L358.7 284.9M381.1 288.9L380.7 286.5M264.0 230.6L264.2 228.5M408.8 170.7L409.0 173.2M177.3 116.5L176.0 118.4M210.0 85.2L209.5 82.5M331.3 317.6L330.7 320.4M306.5 314.9L308.7 315.0M443.3 220.1L444.0 222.8M290.9 176.3L291.0 178.6M287.2 168.7L285.5 169.9M292.3 160.8L290.2 160.2M359.4 236.8L361.3 235.0M312.1 171.5L312.2 174.2M125.6 224.0L124.6 226.7M143.9 208.1L142.9 210.7M366.1 308.8L368.2 307.0M355.4 296.8L352.7 296.6M199.5 130.1L196.8 130.0M217.0 122.8L215.4 124.8M353.2 352.5L350.8 351.0M292.5 143.2L289.9 143.4M300.2 148.3L298.1 149.1M317.4 177.2L316.7 179.5M304.8 392.7L305.7 390.2M305.0 394.0L302.6 394.0M321.9 392.6L322.6 390.3M180.2 269.4L178.1 268.7M167.9 106.5L166.1 104.6M213.4 203.4L212.4 201.3M221.6 193.2L219.6 194.4M216.9 215.6L217.4 213.5M235.0 220.5L235.1 223.3M394.3 291.6L392.7 290.0M432.3 254.9L430.1 254.4M437.7 267.2L434.9 267.0M446.9 277.7L449.3 277.4M184.4 272.3L182.0 273.4M203.8 273.7L203.5 271.1M270.8 248.3L273.4 247.8M287.2 216.6L289.6 217.2M293.6 208.0L295.6 209.7M252.0 139.4L253.5 140.7M251.9 128.4L252.7 130.5M270.5 85.6L268.4 85.1M299.5 315.8L297.2 315.8M259.3 277.3L259.6 274.7M279.7 268.5L280.3 266.3M378.2 159.4L378.2 162.0M374.5 185.6L377.3 185.3M376.2 189.5L377.4 186.9M348.2 361.3L351.1 361.0M327.3 371.6L327.6 373.6M371.1 351.0L368.6 349.9M372.1 362.7L370.0 361.2M371.8 370.2L374.1 371.5M375.7 351.4L373.4 352.2M301.0 116.0L299.6 118.5M286.0 80.4L288.1 79.6M381.8 183.6L383.8 182.4M374.8 206.8L377.2 205.8M348.1 347.8L350.6 348.3M329.1 328.6L327.1 328.8M321.8 321.9L320.3 323.6M211.6 182.9L211.3 185.3M225.8 182.1L226.9 184.8M232.1 158.8L232.9 161.4M235.4 141.5L233.9 140.0M233.3 137.0L230.8 138.3M182.3 81.2L182.4 78.4M370.1 199.7L368.3 197.6M346.4 225.6L348.5 224.9M222.2 178.9L220.7 177.0M212.6 155.0L210.4 155.5M314.5 121.2L316.6 121.3M302.5 155.2L301.0 157.7M302.0 153.8L304.1 154.0M179.4 139.4L182.0 140.1M149.0 146.8L149.4 144.6M139.1 151.1L136.7 151.2M379.7 234.5L381.8 232.6M354.5 240.7L355.0 242.7M320.0 246.0L321.9 244.3M183.1 155.2L182.4 152.4M188.1 159.6L187.0 157.7M155.9 290.2L156.6 293.0M329.8 315.2L331.4 316.8M320.1 320.3L321.7 321.7M302.1 210.0L301.1 212.7M283.1 176.5L283.6 174.0M179.4 137.6L176.9 137.0M173.7 99.3L176.3 99.6M402.0 249.1L399.7 249.7M417.1 263.9L418.2 261.8M408.7 269.8L407.3 268.0M356.0 216.0L354.0 216.4M318.1 400.7L315.8 402.2M305.2 198.7L307.2 200.3M285.6 205.0L283.7 203.9M277.9 228.6L279.7 227.0M360.1 252.2L360.5 254.7M354.0 243.4L351.6 244.8M351.3 243.9L352.3 246.5M240.0 242.6L240.3 245.3M235.4 245.0L236.7 247.4M221.1 236.5L220.6 233.7M147.3 129.0L146.5 131.3M150.2 132.6L147.7 133.8M149.9 143.5L147.3 143.7M276.5 265.6L275.8 263.5M286.5 246.7L288.5 245.4M304.4 236.9L303.7 239.4M298.7 300.6L296.8 298.7M272.5 282.9L273.3 280.4M271.8 279.5L269.7 279.8"/>
<path stroke="#1a34f4" stroke-width="1.35" d="M225.6 231.3L222.3 230.7M398.4 206.9L401.2 204.7M347.4 339.4L350.2 340.8M348.8 363.0L345.1 365.1M195.8 166.6L198.1 166.6M205.0 152.2L207.4 153.4M161.0 122.2L162.9 124.1M193.7 269.8L190.7 271.2M190.7 275.2L190.7 279.2M187.7 280.7L184.7 282.1M179.9 300.8L180.8 302.8M278.4 257.6L276.2 255.3M272.7 93.2L275.5 92.1M275.6 88.6L275.7 85.1M266.5 82.3L263.6 83.9M253.1 80.9L249.7 82.1M180.1 314.3L178.5 316.6M230.3 292.7L229.3 290.2M233.0 288.6L230.8 286.9M207.1 100.0L205.2 99.1M208.7 108.6L208.2 111.6M199.0 112.5L195.6 110.6M239.1 192.7L242.1 194.6M345.1 310.7L349.2 311.8M359.5 307.7L363.0 308.5M371.4 305.4L374.1 306.7M292.0 217.8L294.7 219.7M125.2 170.8L129.4 171.0M301.4 130.5L303.2 131.8M367.6 296.5L365.6 299.7M411.8 219.6L414.1 222.9M412.6 226.1L411.2 229.4M215.2 183.5L217.0 180.1M249.8 168.8L252.4 166.9M255.4 168.1L258.4 169.2M260.3 164.1L258.1 163.1M257.8 279.2L260.4 280.2M247.7 283.8L245.9 286.2M383.5 177.4L385.7 174.3M389.5 175.3L393.3 176.2M402.9 153.4L401.7 149.8M186.9 238.9L189.6 242.2M313.2 145.0L318.8 146.6M319.0 152.4L313.5 154.4M143.0 181.0L146.6 180.8M159.9 174.8L163.0 172.5M166.7 173.9L170.3 175.2M167.2 222.0L165.2 221.3M184.9 235.3L188.0 233.5M260.1 114.3L259.8 118.1M253.4 141.4L256.7 143.3M215.7 183.6L214.4 185.7M214.6 172.2L211.4 169.4M270.5 389.5L266.4 390.2M272.1 404.0L269.3 408.3M264.4 406.9L264.1 401.8M93.2 200.4L90.9 201.6M119.4 183.8L122.2 181.3M124.2 177.5L121.5 176.7M129.8 204.1L133.3 206.4M205.7 79.0L203.4 82.2M203.0 95.3L205.3 95.9M342.9 337.7L339.1 338.4M330.7 346.3L326.6 346.9M348.4 216.1L345.9 219.1M255.5 252.4L259.3 254.2M306.9 368.7L304.2 370.6M311.2 383.6L309.2 388.0M304.3 387.5L303.3 382.8M299.7 363.4L303.7 366.4M302.1 371.1L297.1 371.0M282.2 369.7L279.1 371.8M347.6 258.8L344.7 258.7M117.1 272.0L113.6 268.7M115.6 264.4L120.4 264.9M133.8 268.1L137.2 266.8M168.2 265.2L170.6 263.1M187.9 225.0L185.6 227.5M167.0 183.8L167.8 187.4M124.8 250.4L127.8 247.7M248.7 219.6L243.9 219.1M242.9 214.4L247.1 212.0M247.9 208.6L245.6 206.4M225.0 197.5L223.7 194.1M221.8 187.4L223.9 186.7M327.8 280.1L328.5 278.0M199.0 137.4L196.8 135.0M201.6 126.3L205.0 125.4M207.0 133.0L204.8 134.2M218.5 133.2L220.5 135.6M329.8 207.5L326.8 208.5M385.2 159.7L382.2 160.6M380.7 164.0L379.2 167.3M363.6 178.3L362.0 176.1M368.9 190.0L367.4 193.3M365.0 192.1L363.0 191.1M281.0 148.8L281.5 151.9M147.3 133.3L144.1 131.5M262.9 183.0L259.6 180.7M249.2 182.0L246.4 180.2M308.2 326.9L308.8 323.7M311.0 325.2L312.7 326.4M318.7 318.8L320.2 315.3M103.2 232.8L106.0 230.8M109.9 231.5L113.7 232.2M360.9 270.3L362.0 273.5M357.5 298.9L353.9 303.1M348.9 300.9L349.3 295.5M367.4 315.0L367.1 317.2M268.1 291.4L266.9 295.4M254.4 307.2L251.4 308.4M245.6 320.9L245.5 323.9M116.9 158.1L119.8 156.5M376.9 193.2L378.1 196.6M235.7 72.7L238.4 69.8M280.3 180.1L283.8 182.2M283.5 185.6L283.2 189.0M287.6 198.2L286.4 202.1M394.6 292.9L391.1 293.8M377.6 294.6L376.7 298.6M375.5 298.4L379.3 294.2M384.4 296.5L383.8 302.1M377.0 317.6L379.1 317.3M371.1 318.5L371.3 322.7M268.6 231.5L267.4 229.7M255.2 238.6L251.1 237.9M244.2 243.9L240.7 244.0M341.8 299.2L344.8 301.9M362.5 298.4L363.7 300.2M411.9 167.9L408.6 167.7M184.2 105.0L181.3 105.5M214.8 88.0L213.5 84.6M316.5 320.2L314.1 322.5M310.6 321.8L307.0 321.1M305.4 317.9L303.8 314.7M450.1 238.8L446.4 237.6M290.1 170.4L289.4 167.4M361.0 253.3L360.3 255.8M393.0 258.0L394.4 255.1M215.2 288.8L215.6 286.7M207.1 296.0L204.7 297.0M310.2 171.4L308.4 174.5M304.6 173.9L300.9 173.3M293.4 170.2L295.9 169.0M132.6 205.5L130.4 204.4M148.9 186.7L148.3 189.2M356.4 306.0L354.8 303.2M346.8 305.3L344.3 304.1M188.9 114.2L190.0 117.3M349.2 338.2L348.1 340.2M341.5 334.1L338.7 331.6M329.6 321.1L325.6 322.4M317.0 164.8L321.0 165.6M327.1 173.5L330.8 174.0M317.8 393.5L321.1 395.4M164.3 297.2L163.1 298.8M173.0 288.7L176.2 288.3M215.8 203.2L217.1 200.3M219.6 202.0L221.6 203.5M224.2 201.0L224.8 203.2M300.7 384.3L303.0 385.5M268.9 389.2L265.0 387.9M266.2 367.0L268.4 367.7M249.1 189.1L251.2 189.7M412.8 284.2L417.7 284.8M418.8 289.6L414.5 292.1M427.9 240.8L428.7 244.3M421.1 241.4L419.6 239.3M443.6 269.4L446.0 271.5M449.6 265.7L453.6 266.0M194.8 277.5L192.9 278.4M285.5 227.5L287.7 226.2M301.4 219.7L304.9 223.9M302.1 228.4L296.8 227.1M290.7 209.2L291.2 205.8M240.7 120.1L238.1 119.2M258.2 105.0L260.8 106.4M257.1 99.5L260.5 99.5M264.2 297.3L266.3 296.6M278.3 302.3L280.9 304.3M298.6 312.2L297.0 314.3M261.8 285.8L263.9 283.1M276.2 268.8L278.3 265.3M311.5 373.9L312.8 371.9M378.9 356.5L375.6 358.5M369.9 365.4L370.7 362.0M293.5 99.6L291.6 98.4M348.6 357.0L345.3 355.7M344.3 358.8L343.5 361.4M214.8 181.7L217.7 183.5M226.8 163.4L225.7 160.6M175.3 88.7L173.3 86.8M162.3 92.2L159.9 92.4M172.9 101.0L174.8 99.6M389.8 191.2L386.0 190.2M199.6 189.0L194.2 189.4M192.2 184.3L196.4 180.8M227.0 182.1L230.0 183.0M214.2 158.0L215.3 154.4M211.9 120.8L213.0 117.0M317.3 124.5L318.8 122.2M109.6 225.8L104.0 224.7M103.3 219.0L108.5 216.6M317.9 314.2L316.5 312.0M172.2 138.2L168.3 137.7M173.0 139.9L174.9 137.8M160.9 142.7L157.1 142.7M357.8 238.5L353.8 238.3M327.7 249.6L325.2 251.4M195.5 170.9L196.7 174.3M204.6 168.6L202.4 167.4M155.8 280.6L158.8 281.6M308.1 364.1L308.4 359.4M313.0 358.2L315.5 362.2M308.2 373.4L306.2 370.2M307.8 366.4L309.3 362.6M303.0 356.6L299.9 356.7M291.8 196.2L288.1 197.1M286.1 165.9L290.2 168.7M288.8 173.5L283.9 173.6M271.0 167.4L270.5 163.6M172.7 102.2L170.7 98.9M167.3 99.2L163.9 99.5M388.7 236.8L392.6 237.2M408.6 247.9L412.4 247.5M330.0 186.5L330.6 188.7M355.9 213.2L358.5 215.4M299.9 392.7L303.4 391.8M291.6 195.6L288.2 197.8M288.9 195.3L294.5 194.2M297.2 199.1L293.4 203.3M278.5 213.8L277.8 211.7M224.8 238.5L221.7 240.0M218.6 233.9L220.9 233.4M216.9 227.0L221.7 227.4M222.8 232.0L218.7 234.5M289.0 277.8L288.4 273.9M250.0 281.8L253.4 280.2M274.2 284.5L276.9 283.0"/>
<path stroke="#c8c81e" stroke-width="1.35" d="M196.9 274.9L199.1 275.0M215.8 108.8L217.0 106.3M295.5 106.8L297.6 105.2M159.2 165.1L158.1 163.1M119.8 161.5L117.3 160.9M371.4 369.6L371.8 372.0M170.2 156.2L168.4 154.7"/>
</g>
<circle cx="196.4" cy="92.4" r="6.4" fill="url(#sb)"/>
<circle cx="196.4" cy="84.0" r="6.4" fill="url(#sp)"/>
<circle cx="203.0" cy="98.0" r="6.4" fill="url(#sb)"/>
<circle cx="188.9" cy="97.0" r="6.4" fill="url(#sp)"/>
<circle cx="156.0" cy="112.0" r="6.4" fill="url(#sb)"/>
<circle cx="158.0" cy="105.4" r="6.4" fill="url(#sp)"/>
<circle cx="217.8" cy="108.2" r="6.4" fill="url(#sb)"/>
<circle cx="201.0" cy="113.0" r="6.4" fill="url(#sb)"/>
<circle cx="210.4" cy="114.8" r="6.4" fill="url(#sb)"/>
<circle cx="160.0" cy="122.0" r="6.4" fill="url(#sb)"/>
<circle cx="169.3" cy="123.0" r="6.4" fill="url(#sb)"/>
<circle cx="194.5" cy="121.3" r="6.4" fill="url(#sb)"/>
<circle cx="187.0" cy="123.0" r="6.4" fill="url(#sb)"/>
<circle cx="210.4" cy="124.0" r="6.4" fill="url(#sb)"/>
<circle cx="218.8" cy="129.7" r="6.4" fill="url(#sb)"/>
<circle cx="175.9" cy="131.6" r="6.4" fill="url(#sb)"/>
<circle cx="183.3" cy="130.6" r="6.4" fill="url(#sb)"/>
<circle cx="203.8" cy="129.7" r="6.4" fill="url(#sb)"/>
<circle cx="172.0" cy="141.0" r="6.4" fill="url(#sb)"/>
<circle cx="163.7" cy="145.6" r="6.4" fill="url(#sb)"/>
<circle cx="179.6" cy="144.6" r="6.4" fill="url(#sb)"/>
<circle cx="186.0" cy="140.0" r="6.4" fill="url(#sb)"/>
<circle cx="210.4" cy="145.6" r="6.4" fill="url(#sb)"/>
<circle cx="217.8" cy="140.0" r="6.4" fill="url(#sb)"/>
<circle cx="226.2" cy="143.7" r="6.4" fill="url(#sb)"/>
<circle cx="235.6" cy="141.8" r="6.4" fill="url(#sb)"/>
<circle cx="243.0" cy="141.8" r="6.4" fill="url(#sb)"/>
<circle cx="200.0" cy="141.8" r="6.4" fill="url(#sp)"/>
<circle cx="215.0" cy="154.0" r="6.4" fill="url(#sb)"/>
<circle cx="225.3" cy="154.0" r="6.4" fill="url(#sb)"/>
<circle cx="181.4" cy="154.9" r="6.4" fill="url(#sb)"/>
<circle cx="188.0" cy="159.6" r="6.4" fill="url(#sb)"/>
<circle cx="194.5" cy="155.8" r="6.4" fill="url(#sb)"/>
<circle cx="202.0" cy="163.3" r="6.4" fill="url(#sb)"/>
<circle cx="209.4" cy="162.4" r="6.4" fill="url(#sb)"/>
<circle cx="230.0" cy="162.4" r="6.4" fill="url(#sb)"/>
<circle cx="189.8" cy="169.8" r="6.4" fill="url(#sb)"/>
<circle cx="197.3" cy="171.7" r="6.4" fill="url(#sb)"/>
<circle cx="181.4" cy="177.3" r="6.4" fill="url(#sb)"/>
<circle cx="200.0" cy="182.0" r="6.4" fill="url(#sb)"/>
<circle cx="340.7" cy="270.6" r="5.9" fill="url(#sb)"/>
<circle cx="347.0" cy="270.6" r="5.9" fill="url(#sb)"/>
<circle cx="318.7" cy="277.0" r="5.9" fill="url(#sb)"/>
<circle cx="311.6" cy="288.4" r="5.9" fill="url(#sb)"/>
<circle cx="325.0" cy="281.3" r="5.9" fill="url(#sb)"/>
<circle cx="330.8" cy="279.9" r="5.9" fill="url(#sb)"/>
<circle cx="336.5" cy="279.0" r="5.9" fill="url(#sb)"/>
<circle cx="342.0" cy="278.4" r="5.9" fill="url(#sb)"/>
<circle cx="349.2" cy="278.4" r="5.9" fill="url(#sb)"/>
<circle cx="363.4" cy="282.0" r="5.9" fill="url(#sb)"/>
<circle cx="357.7" cy="281.3" r="5.9" fill="url(#sb)"/>
<circle cx="320.9" cy="289.8" r="5.9" fill="url(#sb)"/>
<circle cx="328.0" cy="291.2" r="5.9" fill="url(#sb)"/>
<circle cx="335.8" cy="290.5" r="5.9" fill="url(#sb)"/>
<circle cx="347.0" cy="289.8" r="5.9" fill="url(#sb)"/>
<circle cx="356.3" cy="290.5" r="5.9" fill="url(#sb)"/>
<circle cx="362.0" cy="296.2" r="5.9" fill="url(#sb)"/>
<circle cx="328.0" cy="301.0" r="5.9" fill="url(#sb)"/>
<circle cx="335.0" cy="302.5" r="5.9" fill="url(#sb)"/>
<circle cx="342.0" cy="306.8" r="5.9" fill="url(#sb)"/>
<circle cx="355.0" cy="302.5" r="5.9" fill="url(#sb)"/>
<circle cx="363.4" cy="304.0" r="5.9" fill="url(#sb)"/>
<circle cx="370.5" cy="306.8" r="5.9" fill="url(#sb)"/>
<circle cx="378.3" cy="307.5" r="5.9" fill="url(#sb)"/>
<circle cx="345.0" cy="297.6" r="5.9" fill="url(#sp)"/>
<circle cx="327.2" cy="311.8" r="5.9" fill="url(#sb)"/>
<circle cx="336.5" cy="314.0" r="5.9" fill="url(#sb)"/>
<circle cx="342.8" cy="315.3" r="5.9" fill="url(#sb)"/>
<circle cx="350.6" cy="312.5" r="5.9" fill="url(#sb)"/>
<circle cx="357.7" cy="313.2" r="5.9" fill="url(#sb)"/>
<circle cx="366.2" cy="314.0" r="5.9" fill="url(#sb)"/>
<circle cx="374.0" cy="319.6" r="5.9" fill="url(#sb)"/>
<circle cx="347.0" cy="321.7" r="5.9" fill="url(#sb)"/>
<circle cx="372.0" cy="326.0" r="5.9" fill="url(#sb)"/>
<circle cx="381.8" cy="332.3" r="5.9" fill="url(#sb)"/>
<circle cx="387.5" cy="328.0" r="5.9" fill="url(#sp)"/>
<circle cx="380.4" cy="340.8" r="5.9" fill="url(#sp)"/>
<circle cx="340.0" cy="328.0" r="5.9" fill="url(#sb)"/>
<circle cx="342.0" cy="335.0" r="5.9" fill="url(#sb)"/>
<circle cx="350.6" cy="336.6" r="5.9" fill="url(#sp)"/>
<circle cx="340.7" cy="343.7" r="5.9" fill="url(#sp)"/>
<g fill="none" stroke-linecap="round">
<path stroke="#747474" stroke-width="1.1" d="M186.3 236.1L190.8 240.4M190.8 240.4L198.9 237.9M198.9 237.9L196.9 236.2M198.9 237.9L201.9 230.7M201.9 230.7L208.1 230.9M208.1 230.9L210.2 228.6M212.3 226.3L219.3 228.1M219.3 228.1L222.7 225.7M226.1 223.3L229.9 224.2M233.8 225.1L237.6 219.8M237.6 219.8L235.2 212.2M235.2 212.2L240.7 214.1M240.7 214.1L245.4 210.6M245.4 210.6L245.3 205.4M250.2 203.6L253.3 207.8M250.4 212.1L245.4 210.6M235.4 270.3L229.9 265.1M229.9 265.1L228.7 270.5M228.7 270.5L230.9 272.4M229.9 265.1L222.5 268.2M222.5 268.2L222.4 265.3M222.5 268.2L216.7 263.2M216.7 263.2L214.0 268.3M214.0 268.3L214.7 271.4M216.7 263.2L210.5 265.5M210.5 265.5L210.4 262.5M210.5 265.5L203.3 261.5M203.3 261.5L206.3 256.8M281.7 276.1L286.8 282.8M286.8 282.8L288.1 280.6M286.8 282.8L294.4 283.6M294.4 283.6L297.8 288.8M297.8 288.8L305.5 287.9M305.5 287.9L304.3 290.7M305.5 287.9L311.3 294.0M311.3 294.0L306.9 297.7M311.3 294.0L318.0 291.4M318.0 291.4L320.5 285.8M320.5 285.8L326.8 284.6M326.8 284.6L324.7 282.7M326.8 284.6L329.1 276.6M329.1 276.6L330.8 279.0M252.4 199.9L250.1 207.9M250.1 207.9L253.6 213.4M253.6 213.4L250.0 218.3M250.0 218.3L251.8 226.2M251.8 226.2L253.6 224.2M251.8 226.2L249.3 228.7M246.9 231.1L250.9 235.0M250.9 235.0L251.3 240.6M246.9 231.1L247.9 238.6M247.9 238.6L245.0 238.1M247.9 238.6L242.1 243.5M306.1 153.4L312.0 157.8M312.0 157.8L313.3 155.7M312.0 157.8L316.0 156.6M320.0 155.4L317.7 153.1M320.0 155.4L322.4 148.3M366.2 327.7L359.5 324.1M359.5 324.1L363.6 321.7M363.6 321.7L363.6 319.0M359.5 324.1L353.8 326.6M353.8 326.6L348.4 323.1M348.4 323.1L347.6 329.0M347.6 329.0L342.8 332.4M348.4 323.1L341.2 326.3M341.2 326.3L345.7 329.3M345.7 329.3L348.4 327.9M341.2 326.3L336.0 322.5M336.0 322.5L339.1 321.0M336.0 322.5L330.1 326.3M288.2 378.2L291.2 371.7M291.2 371.7L289.1 366.0M289.1 366.0L294.7 365.2M289.1 366.0L293.1 359.7M293.1 359.7L289.2 354.5M289.2 354.5L292.4 353.5M289.2 354.5L282.6 355.8M282.6 355.8L278.2 349.6M278.2 349.6L272.2 349.1M172.2 104.1L170.1 98.5M170.1 98.5L173.1 97.9M170.1 98.5L163.7 97.9M163.7 97.9L166.7 103.0M166.7 103.0L172.6 103.2M142.7 246.1L148.9 251.3M148.9 251.3L150.0 248.7M148.9 251.3L156.8 249.7M156.8 249.7L159.5 242.2M159.5 242.2L162.2 244.1M159.5 242.2L167.4 239.4M167.4 239.4L166.6 245.7M166.6 245.7L163.4 247.2M167.4 239.4L168.5 232.9M168.5 232.9L163.6 233.9M163.6 233.9L162.2 236.3M168.5 232.9L173.8 229.7M173.8 229.7L173.9 223.4M173.9 223.4L171.6 224.6M173.9 223.4L180.5 218.8M180.5 218.8L179.8 211.3M179.8 211.3L182.7 212.5M179.8 211.3L185.6 207.4M185.6 207.4L185.3 203.9M237.1 360.3L242.2 354.8M242.2 354.8L239.4 357.3M236.5 359.8L235.4 355.2M235.4 355.2L237.0 353.1M236.5 359.8L229.5 358.6M229.5 358.6L229.4 364.7M229.4 364.7L226.3 366.3M229.5 358.6L236.6 359.7M236.6 359.7L237.9 363.5M239.2 367.4L246.5 368.0M246.5 368.0L249.9 374.4M249.9 374.4L256.4 374.9M256.4 374.9L261.6 370.3M261.6 370.3L261.7 363.1M261.7 363.1L255.8 365.5M255.8 365.5L251.1 361.3M251.1 361.3L246.2 362.3M243.7 358.0L247.1 354.3M251.7 356.3L251.1 361.3M187.8 126.4L194.1 125.5M194.1 125.5L198.4 119.2M198.4 119.2L205.0 119.7M205.0 119.7L209.0 112.6M209.0 112.6L216.1 113.4M216.1 113.4L218.6 111.0M221.1 108.6L226.7 110.7M226.7 110.7L226.6 105.4M226.7 110.7L233.3 107.0M233.3 107.0L231.3 104.9M233.3 107.0L238.6 111.0M238.6 111.0L244.8 107.3M244.8 107.3L245.7 110.0M360.5 201.2L358.6 197.8M356.7 194.5L353.0 194.7M349.3 195.0L350.4 197.2M349.3 195.0L343.7 189.1M343.7 189.1L347.9 187.2M347.9 187.2L347.6 182.6M343.7 189.1L340.6 189.5M337.4 189.8L332.6 185.1M419.5 290.6L425.7 289.6M425.7 289.6L428.0 283.9M428.0 283.9L433.4 286.5M433.4 286.5L438.8 284.0M428.0 283.9L424.8 277.5M424.8 277.5L427.7 276.7M424.8 277.5L418.2 277.0M418.2 277.0L414.3 282.5M414.3 282.5L410.6 282.7M407.0 282.9L409.5 287.2M409.5 287.2L407.8 289.3M407.0 282.9L404.2 280.3M401.5 277.7L395.0 278.5M395.0 278.5L391.9 275.9M388.9 273.3L388.2 278.4M388.2 278.4L391.0 282.8M388.9 273.3L381.9 274.2M381.9 274.2L377.5 269.6M377.5 269.6L379.9 268.9M377.5 269.6L377.8 261.4M377.8 261.4L372.1 262.0M194.6 198.9L191.3 191.8M191.3 191.8L184.5 191.3M184.5 191.3L185.6 188.0M184.5 191.3L180.4 186.2M180.4 186.2L173.6 188.0M173.6 188.0L171.4 196.1M171.4 196.1L168.8 194.6M171.4 196.1L163.5 197.9M163.5 197.9L163.1 195.0M163.5 197.9L158.5 192.9M158.5 192.9L151.7 194.6M151.7 194.6L145.0 190.0M145.0 190.0L138.1 194.5M138.1 194.5L130.2 192.4M152.4 318.4L158.1 322.6M158.1 322.6L155.8 324.6M158.1 322.6L164.9 318.5M164.9 318.5L161.3 313.4M161.3 313.4L164.2 307.9M164.9 318.5L166.3 310.5M166.3 310.5L173.4 307.4M173.4 307.4L173.4 309.9M173.4 307.4L175.7 299.2M175.7 299.2L179.4 298.5M433.9 262.0L428.3 265.0M428.3 265.0L429.0 260.5M428.3 265.0L428.8 272.9M428.8 272.9L434.6 272.3M434.6 272.3L436.2 269.5M428.8 272.9L423.7 276.5M423.7 276.5L424.6 280.6M425.6 284.6L420.1 284.5M420.1 284.5L418.4 286.9M425.6 284.6L420.8 289.1M420.8 289.1L423.8 289.6M420.8 289.1L420.3 282.7M420.3 282.7L426.4 278.9M426.4 278.9L424.1 276.5M426.4 278.9L433.4 282.3M433.4 282.3L439.3 276.9M439.3 276.9L436.3 276.0M439.3 276.9L446.1 278.4M446.1 278.4L442.4 282.9M442.4 282.9L439.4 282.1M352.1 232.0L356.1 224.7M356.1 224.7L353.4 223.4M356.1 224.7L351.8 218.2M351.8 218.2L354.5 216.6M351.8 218.2L354.4 212.7M354.4 212.7L361.3 210.8M361.3 210.8L366.0 215.9M366.0 215.9L367.1 213.2M366.0 215.9L373.8 214.5M373.8 214.5L378.1 220.0M378.1 220.0L381.5 220.4M437.8 255.5L434.2 263.2M434.2 263.2L437.0 262.7M434.2 263.2L438.2 268.7M438.2 268.7L436.3 274.7M436.3 274.7L441.2 280.4M280.2 190.0L275.4 183.5M275.4 183.5L280.5 181.4M275.4 183.5L269.2 184.9M269.2 184.9L271.8 186.9M269.2 184.9L263.0 180.0M263.0 180.0L259.5 180.9M256.0 181.7L249.5 177.2M355.8 242.8L352.7 235.6M352.7 235.6L355.2 235.0M352.7 235.6L356.2 229.6M356.2 229.6L352.6 222.3M352.6 222.3L354.9 216.3M354.9 216.3L352.1 216.1M354.9 216.3L362.8 213.6M362.8 213.6L360.7 211.6M440.7 183.6L444.4 189.3M444.4 189.3L441.6 190.8M444.4 189.3L452.4 190.7M452.4 190.7L450.6 192.4M452.4 190.7L455.3 196.9M455.3 196.9L458.8 194.0M299.7 342.9L305.6 346.2M305.6 346.2L311.6 342.4M311.6 342.4L313.1 345.6M311.6 342.4L315.1 344.0M318.6 345.5L325.9 342.0M325.9 342.0L332.6 344.7M332.6 344.7L332.6 339.8M332.6 339.8L330.1 338.7M332.6 344.7L338.8 341.8M338.8 341.8L340.6 347.0M340.6 347.0L343.4 348.3M338.8 341.8L343.8 346.0M343.8 346.0L340.0 349.3M340.0 349.3L340.8 351.9M293.4 185.7L299.5 181.0M299.5 181.0L299.5 173.1M299.5 173.1L296.6 171.6M293.6 170.1L295.8 168.5M293.6 170.1L292.9 162.3M292.9 162.3L295.3 160.3M297.7 158.4L305.1 160.9M305.1 160.9L304.9 158.2M305.1 160.9L307.2 167.8M307.2 167.8L304.4 168.2M307.2 167.8L312.8 170.6M312.8 170.6L312.3 179.0M312.3 179.0L307.6 176.5M307.6 176.5L306.7 173.8M252.4 324.6L250.0 318.0M250.0 318.0L255.0 313.1M255.0 313.1L254.4 306.1M254.4 306.1L251.8 306.9M254.4 306.1L260.9 302.0M260.9 302.0L257.7 297.5M257.7 297.5L260.1 292.5M260.9 302.0L260.6 295.4M260.6 295.4L263.6 295.9M439.2 248.5L440.7 256.7M440.7 256.7L445.4 255.0M445.4 255.0L445.6 252.2M440.7 256.7L447.4 260.4M447.4 260.4L444.2 263.8M444.2 263.8L439.6 263.8M439.6 263.8L436.7 267.9M431.9 266.3L431.9 261.3M436.6 259.7L439.6 263.8M447.4 260.4L447.8 267.6M447.8 267.6L442.0 263.3M442.0 263.3L442.0 266.1M442.0 263.3L442.1 254.9M442.1 254.9L437.3 257.3M437.3 257.3L436.6 260.2M442.1 254.9L436.6 251.5M436.6 251.5L436.4 256.1M436.4 256.1L432.7 258.6M432.7 258.6L432.5 264.0M427.4 265.5L424.4 261.1M427.6 256.8L432.7 258.6M436.6 251.5L435.6 245.1M435.6 245.1L429.4 243.1M429.4 243.1L422.3 246.9M422.3 246.9L422.2 255.3M422.2 255.3L419.6 254.3M422.2 255.3L419.2 256.6M274.5 323.6L278.5 328.7M278.5 328.7L272.4 329.3M272.4 329.3L270.0 334.8M278.5 328.7L284.7 329.4M284.7 329.4L289.5 322.9M289.5 322.9L297.4 322.8M297.4 322.8L295.7 317.0M295.7 317.0L289.7 315.8M297.4 322.8L300.9 329.5M300.9 329.5L307.4 329.2M336.5 257.5L341.4 260.9M341.4 260.9L343.0 257.9M341.4 260.9L341.6 269.3M341.6 269.3L346.6 265.3M341.6 269.3L347.0 272.2M347.0 272.2L351.6 268.1M351.6 268.1L357.8 271.0M357.8 271.0L358.6 278.1M358.6 278.1L352.8 282.3M352.8 282.3L354.5 288.9M354.5 288.9L352.1 288.1M354.5 288.9L360.6 290.3M360.6 290.3L363.9 295.6M363.9 295.6L362.7 299.1M361.5 302.5L367.0 301.7M361.5 302.5L365.2 308.9M226.5 368.8L228.3 362.7M228.3 362.7L223.3 364.7M228.3 362.7L229.6 366.3M130.5 150.3L127.3 150.2M124.0 150.1L120.2 157.2M296.4 314.5L289.7 316.4M289.7 316.4L288.8 320.2M288.0 324.0L293.7 323.9M288.0 324.0L281.5 325.3M281.5 325.3L283.1 321.8M284.7 318.2L292.8 317.9M292.8 317.9L294.0 314.6M295.2 311.2L292.5 311.9M295.2 311.2L293.3 308.1M291.4 305.0L295.8 299.2M295.8 299.2L294.6 291.2M294.6 291.2L287.6 288.5M287.6 288.5L290.1 284.4M290.1 284.4L294.8 285.0M294.8 285.0L298.1 281.5M302.4 283.5L301.8 288.3M297.1 289.2L294.8 285.0M287.6 288.5L285.6 281.4M285.6 281.4L290.1 274.7M112.6 275.5L118.8 274.1M118.8 274.1L121.2 268.0M121.2 268.0L125.9 270.8M125.9 270.8L125.7 273.8M121.2 268.0L128.1 267.6M128.1 267.6L129.8 264.9M131.5 262.3L133.3 267.1M133.3 267.1L130.2 271.3M130.2 271.3L131.9 276.5M127.5 279.7L123.0 276.5M124.8 271.3L130.2 271.3M131.5 262.3L139.0 261.0M139.0 261.0L140.6 253.6M140.6 253.6L137.7 253.1M140.6 253.6L147.6 252.2M147.6 252.2L149.7 245.9M149.7 245.9L156.8 243.0M156.8 243.0L155.4 248.4M155.4 248.4L158.0 253.5M158.0 253.5L163.5 254.4M164.3 259.9L159.4 262.4M155.4 258.4L158.0 253.5M156.8 243.0L159.1 235.6M159.1 235.6L162.9 239.6M159.1 235.6L165.5 235.1M165.5 235.1L169.0 229.7M289.5 174.1L295.4 176.3M295.4 176.3L292.9 178.2M295.4 176.3L302.6 172.6M302.6 172.6L298.5 169.2M302.6 172.6L303.3 165.9M303.3 165.9L297.0 165.5M297.0 165.5L294.4 159.8M294.4 159.8L289.6 158.8M289.0 153.9L293.6 151.8M296.9 155.5L294.4 159.8M303.3 165.9L309.5 162.4M309.5 162.4L305.4 158.7M309.5 162.4L309.3 158.8M309.0 155.1L313.9 155.8M313.9 155.8L315.5 153.5M309.0 155.1L316.0 151.7M316.0 151.7L321.2 156.3M321.2 156.3L316.8 159.0M316.8 159.0L312.5 155.9M312.5 155.9L307.6 157.5M304.6 153.4L307.6 149.2M312.5 150.8L312.5 155.9M207.1 170.5L209.9 176.5M209.9 176.5L216.0 177.5M216.0 177.5L218.1 185.1M218.1 185.1L224.4 186.7M224.4 186.7L220.7 189.7M224.4 186.7L229.2 182.7M229.2 182.7L229.5 185.2M229.2 182.7L233.0 183.6M236.7 184.5L234.7 187.1M236.7 184.5L240.9 178.4M240.9 178.4L248.5 178.5M248.5 178.5L246.2 172.9M246.2 172.9L249.6 167.9M248.5 178.5L252.9 172.0M252.9 172.0L249.6 170.9M252.9 172.0L260.7 171.0M260.7 171.0L259.2 168.3M260.7 171.0L264.1 163.9M264.1 163.9L271.8 163.1M271.8 163.1L267.5 158.4M397.0 247.2L391.2 244.0M391.2 244.0L394.3 240.5M391.2 244.0L385.3 246.3M385.3 246.3L385.2 240.3M385.2 240.3L388.0 238.4M385.3 246.3L384.4 253.2M384.4 253.2L389.2 258.6M389.2 258.6L387.5 264.7M387.5 264.7L385.8 262.5M448.6 216.6L441.1 215.7M441.1 215.7L437.2 220.9M437.2 220.9L432.1 217.0M432.1 217.0L426.5 220.1M426.5 220.1L426.5 224.8M426.5 224.8L422.4 227.0M422.4 227.0L418.4 224.7M418.4 224.7L418.5 220.1M418.5 220.1L422.5 217.8M422.5 217.8L426.5 220.1M437.2 220.9L441.2 228.4M441.2 228.4L443.1 226.9M441.2 228.4L437.8 234.1M437.8 234.1L433.5 231.3M433.5 231.3L432.1 226.3M437.8 234.1L438.6 237.2M439.5 240.2L437.3 243.5M435.2 246.7L433.5 242.4M435.2 246.7L437.6 253.4M437.6 253.4L431.7 259.3M431.7 259.3L432.6 266.1M432.6 266.1L434.9 264.5M140.5 304.2L133.2 302.8M133.2 302.8L140.6 300.0M140.6 300.0L147.5 304.4M147.5 304.4L146.5 312.0M146.5 312.0L149.3 313.5M152.1 315.0L153.1 311.7M152.1 315.0L152.5 322.2M152.5 322.2L159.5 325.8M159.5 325.8L161.6 332.8M161.6 332.8L159.2 333.3M161.6 332.8L165.3 334.6M311.3 382.7L316.4 379.0M316.4 379.0L318.0 381.9M316.4 379.0L317.3 372.5M317.3 372.5L312.5 373.7M317.3 372.5L323.3 368.6M323.3 368.6L322.6 361.5M322.6 361.5L324.9 359.2M327.1 356.9L326.9 349.7M326.9 349.7L330.7 352.4M330.7 352.4L330.4 354.9M326.9 349.7L323.2 348.2M319.6 346.6L317.9 339.2M317.9 339.2L311.8 336.5M311.8 336.5L310.8 328.9M310.8 328.9L304.9 324.8M304.9 324.8L305.1 317.8M305.1 317.8L301.9 318.3M225.9 331.4L233.0 328.7M233.0 328.7L235.4 322.9M235.4 322.9L230.1 317.7M230.1 317.7L228.5 320.6M230.1 317.7L223.1 319.8M223.1 319.8L224.4 322.7M223.1 319.8L216.4 315.9M227.6 65.7L232.7 59.9M232.7 59.9L227.5 56.1M232.7 59.9L230.0 67.0M230.0 67.0L222.1 68.0M222.1 68.0L220.3 74.9M220.3 74.9L223.3 75.2M220.3 74.9L214.4 76.2M214.4 76.2L211.7 82.7M211.7 82.7L207.7 79.6M207.7 79.6L204.9 80.0M211.7 82.7L203.6 83.0M203.6 83.0L204.6 88.2M204.6 88.2L207.4 89.0M203.6 83.0L199.5 89.3M199.5 89.3L202.5 89.4M199.5 89.3L201.3 95.6M201.3 95.6L197.3 101.2M197.3 101.2L200.1 103.1M426.7 188.6L419.9 193.6M419.9 193.6L422.6 195.6M419.9 193.6L420.3 200.2M420.3 200.2L424.8 196.1M420.3 200.2L414.3 202.9M414.3 202.9L417.1 204.3M414.3 202.9L414.1 210.5M414.1 210.5L411.5 209.8M414.1 210.5L408.3 215.2M408.3 215.2L407.6 209.7M407.6 209.7L402.6 207.3M408.3 215.2L408.7 222.4M408.7 222.4L405.6 222.5M408.7 222.4L402.4 227.9M402.4 227.9L401.3 223.3M401.3 223.3L402.8 221.3M402.4 227.9L404.6 233.6M404.6 233.6L410.6 235.0M410.6 235.0L414.0 242.8M414.0 242.8L411.3 242.7M414.0 242.8L410.6 248.5M410.6 248.5L414.1 253.9M274.4 149.6L277.7 143.9M277.7 143.9L273.4 138.4M273.4 138.4L274.7 132.2M274.7 132.2L270.1 127.6M270.1 127.6L271.2 120.7M271.2 120.7L267.0 115.4M267.0 115.4L269.1 108.7M146.7 282.0L143.9 288.3M143.9 288.3L139.9 285.5M143.9 288.3L146.2 294.2M146.2 294.2L142.8 300.8M142.8 300.8L135.2 299.9M280.7 160.3L285.1 164.5M285.1 164.5L281.0 167.7M281.0 167.7L278.2 167.2M285.1 164.5L291.1 161.9M291.1 161.9L298.1 165.6M298.1 165.6L304.7 161.7M304.7 161.7L301.5 158.4M301.5 158.4L296.8 158.6M296.8 158.6L293.9 163.1M288.7 161.7L288.5 156.3M293.5 154.4L296.8 158.6M304.7 161.7L312.6 164.8M312.6 164.8L319.3 161.4M319.3 161.4L325.4 163.6M325.4 163.6L320.0 167.2M325.4 163.6L330.9 159.6M189.9 91.5L185.0 98.0M185.0 98.0L187.9 99.7M185.0 98.0L188.1 103.6M188.1 103.6L190.2 101.8M188.1 103.6L185.9 110.0M185.9 110.0L190.5 114.1M190.5 114.1L188.3 115.8M190.5 114.1L190.2 121.6M190.2 121.6L185.3 117.6M185.3 117.6L179.3 119.7M259.9 321.1L259.9 329.1M259.9 329.1L257.2 327.9M259.9 329.1L255.4 323.9M255.4 323.9L256.8 317.5M256.8 317.5L252.7 312.6M252.7 312.6L255.2 311.8M252.7 312.6L246.3 312.8M246.3 312.8L248.9 307.2M248.9 307.2L252.1 305.9M246.3 312.8L242.1 307.6M242.1 307.6L234.3 306.9M399.6 183.2L403.0 175.6M403.0 175.6L398.5 170.8M398.5 170.8L398.0 175.5M398.0 175.5L400.1 176.9M398.5 170.8L398.6 163.8M398.6 163.8L395.6 164.2M398.6 163.8L392.8 158.5M392.8 158.5L393.1 151.7M393.1 151.7L398.2 152.8M398.2 152.8L400.0 150.6M393.1 151.7L400.6 149.0M400.6 149.0L405.7 154.0M405.7 154.0L406.9 150.8M405.7 154.0L412.5 151.2M412.5 151.2L417.2 155.8M417.2 155.8L414.9 157.7M228.5 91.4L222.7 88.5M222.7 88.5L222.1 82.2M222.1 82.2L219.0 83.1M222.1 82.2L225.6 79.9M229.2 77.6L228.8 80.6M229.2 77.6L234.9 79.3M234.9 79.3L238.9 74.6M238.9 74.6L246.0 74.9M246.0 74.9L249.6 68.3M249.6 68.3L245.1 68.3M245.1 68.3L244.0 70.5M249.6 68.3L257.7 67.4M257.7 67.4L255.6 63.3M305.6 258.6L302.8 257.1M299.9 255.7L300.3 258.5M299.9 255.7L294.4 260.0M294.4 260.0L287.0 256.1M287.0 256.1L285.9 261.5M285.9 261.5L289.8 265.4M287.0 256.1L281.8 260.2M281.8 260.2L285.8 262.8M285.8 262.8L286.9 267.4M286.9 267.4L292.0 269.5M291.6 275.0L286.2 276.2M283.4 271.5L286.9 267.4M281.8 260.2L283.6 267.3M283.6 267.3L280.7 266.5M283.6 267.3L277.8 273.0M277.8 273.0L278.3 280.8M278.3 280.8L281.2 280.4M395.1 316.9L396.6 324.6M396.6 324.6L399.0 322.3M396.6 324.6L389.7 319.8M389.7 319.8L387.9 322.4M389.7 319.8L390.4 313.5M390.4 313.5L384.0 309.0M384.0 309.0L386.9 307.7M384.0 309.0L377.4 312.9M377.4 312.9L380.3 314.2M377.4 312.9L373.7 311.7M370.0 310.5L368.0 303.3M368.0 303.3L371.0 304.4M368.0 303.3L361.2 302.2M361.2 302.2L362.0 299.4M344.8 223.6L351.8 220.5M351.8 220.5L353.8 213.9M353.8 213.9L356.9 218.2M356.9 218.2L356.5 221.1M353.8 213.9L359.6 211.7M359.6 211.7L362.9 204.3M362.9 204.3L358.2 204.9M358.2 204.9L356.8 207.1M362.9 204.3L371.3 203.5M371.3 203.5L374.7 198.4M374.7 198.4L382.8 198.8M382.8 198.8L386.5 204.1M386.5 204.1L382.2 210.2M382.2 210.2L386.5 213.1M296.1 268.9L298.5 266.7M300.9 264.4L300.7 256.5M300.7 256.5L295.7 258.2M295.7 258.2L293.2 262.8M300.7 256.5L303.1 254.5M305.4 252.6L305.2 249.2M305.0 245.9L308.3 246.5M305.0 245.9L307.8 243.6M310.6 241.3L312.4 243.8M232.3 251.8L226.6 254.2M226.6 254.2L220.9 250.0M220.9 250.0L225.7 247.6M225.7 247.6L230.8 249.1M220.9 250.0L214.9 253.3M214.9 253.3L217.2 255.6M214.9 253.3L209.0 251.5M209.0 251.5L211.3 247.3M211.3 247.3L209.0 243.2M209.0 251.5L206.0 253.2M203.0 254.9L203.7 249.4M203.7 249.4L206.5 248.1M203.0 254.9L197.3 252.4M197.3 252.4L192.4 256.4M192.4 256.4L192.2 250.2M192.4 256.4L193.8 263.7M193.8 263.7L191.1 262.8M193.8 263.7L197.0 265.4M200.2 267.2L198.1 270.1M200.2 267.2L200.8 270.8M201.4 274.4L205.0 270.8M205.0 270.8L204.9 265.8M201.4 274.4L204.5 275.1M207.6 275.8L203.8 279.5M203.8 279.5L205.6 284.5M205.6 284.5L210.2 285.4M210.2 285.4L211.8 289.8M211.8 289.8L208.8 293.4M208.8 293.4L204.1 292.5M204.1 292.5L202.6 288.1M202.6 288.1L205.6 284.5M314.6 257.8L320.8 255.1M320.8 255.1L323.1 247.8M323.1 247.8L319.4 241.5M319.4 241.5L322.9 241.8M319.4 241.5L322.8 234.9M322.8 234.9L326.9 239.9M326.9 239.9L330.5 239.7M322.8 234.9L319.9 228.0M319.9 228.0L315.8 230.8M319.9 228.0L311.8 226.6M311.8 226.6L313.0 223.5M311.8 226.6L308.3 219.4M308.3 219.4L301.7 219.6M301.7 219.6L302.5 222.1M301.7 219.6L297.3 213.0M297.3 213.0L293.8 212.9M290.3 212.8L286.7 206.6M286.7 206.6L289.7 205.2M446.2 217.4L451.6 214.4M451.6 214.4L447.0 211.8M447.0 211.8L445.8 206.7M451.6 214.4L453.0 206.1M453.0 206.1L449.7 205.9M154.0 286.6L150.5 280.2M150.5 280.2L144.1 279.0M144.1 279.0L142.4 271.9M142.4 271.9L138.7 275.2M138.7 275.2L136.2 274.1M142.4 271.9L134.7 268.5M134.7 268.5L132.4 274.4M134.7 268.5L126.9 271.8M126.9 271.8L127.5 269.2M126.9 271.8L120.5 266.4M120.5 266.4L125.6 263.9M125.6 263.9L130.4 266.9M130.4 266.9L134.7 264.6M134.7 264.6L138.8 267.2M138.8 267.2L138.7 272.0M138.7 272.0L134.4 274.3M134.4 274.3L130.3 271.8M130.3 271.8L130.4 266.9M120.5 266.4L121.1 259.9M121.1 259.9L126.9 261.7M126.9 261.7L128.2 267.6M121.1 259.9L117.0 255.1M281.3 245.2L287.8 243.8M287.8 243.8L293.1 248.8M293.1 248.8L294.8 246.4M293.1 248.8L300.1 248.2M300.1 248.2L305.2 253.7M305.2 253.7L302.8 255.1M305.2 253.7L308.2 253.1M311.1 252.4L310.2 255.5M311.1 252.4L317.0 258.4M317.0 258.4L317.8 255.3M317.0 258.4L314.1 265.3M314.1 265.3L320.5 266.0M314.1 265.3L317.7 273.0M317.7 273.0L312.9 273.8M312.9 273.8L311.2 275.9M317.7 273.0L311.9 279.2M311.9 279.2L316.8 282.5M316.8 282.5L321.7 279.4M311.9 279.2L314.9 285.8M314.9 285.8L318.6 282.9M318.6 282.9L318.7 278.2M314.9 285.8L310.9 292.9M310.9 292.9L313.6 300.3M313.6 300.3L310.5 299.9M207.4 172.8L214.3 170.3M214.3 170.3L212.0 164.6M212.0 164.6L205.8 164.3M205.8 164.3L203.1 168.4M203.1 168.4L198.1 168.1M198.1 168.1L195.9 163.7M195.9 163.7L198.6 159.5M198.6 159.5L203.6 159.8M203.6 159.8L205.8 164.3M214.3 170.3L214.7 163.3M214.7 163.3L209.1 164.1M209.1 164.1L205.9 168.7M214.7 163.3L222.5 160.6M222.5 160.6L221.9 166.8M221.9 166.8L217.4 170.9M222.5 160.6L225.3 154.3M225.3 154.3L231.9 154.2M231.9 154.2L235.4 160.9M235.4 160.9L243.6 162.6M243.6 162.6L245.0 168.5M245.0 168.5L240.2 169.6M240.2 169.6L238.6 171.9M316.4 191.9L322.7 196.6M322.7 196.6L330.2 194.2M330.2 194.2L334.6 199.6M334.6 199.6L331.4 201.0M334.6 199.6L341.3 199.1M341.3 199.1L340.9 194.5M340.9 194.5L345.0 192.5M345.0 192.5L345.9 187.7M350.7 187.0L352.8 191.4M349.3 194.7L345.0 192.5M341.3 199.1L344.7 204.0M344.7 204.0L352.8 202.2M352.8 202.2L354.2 194.8M354.2 194.8L356.2 196.7M354.2 194.8L357.5 193.9M360.8 192.9L354.4 197.1M354.4 197.1L359.7 199.1M359.7 199.1L364.9 196.9M354.4 197.1L347.0 193.4M406.1 186.8L412.8 191.1M412.8 191.1L418.7 187.3M418.7 187.3L425.6 191.2M425.6 191.2L431.4 188.7M431.4 188.7L431.9 185.1M432.5 181.5L439.7 179.4M439.7 179.4L438.3 176.9M439.7 179.4L441.2 171.2M441.2 171.2L435.3 173.2M435.3 173.2L433.1 170.6M183.3 148.2L190.6 147.5M190.6 147.5L189.4 141.9M190.6 147.5L192.8 139.7M192.8 139.7L200.0 137.8M200.0 137.8L199.0 135.0M200.0 137.8L201.6 129.9M201.6 129.9L199.2 130.9M201.6 129.9L195.9 125.4M195.9 125.4L197.2 118.0M388.3 330.2L387.2 333.7M386.2 337.2L387.7 329.2M387.7 329.2L395.0 326.6M395.0 326.6L394.6 331.7M395.0 326.6L395.2 319.4M395.2 319.4L401.1 316.6M401.1 316.6L400.9 319.4M401.1 316.6L401.9 308.8M401.9 308.8L403.9 305.0M406.0 301.3L402.9 295.1M402.9 295.1L399.5 294.6M396.2 294.1L397.4 297.0M396.2 294.1L393.5 287.9M393.5 287.9L398.0 283.2M398.0 283.2L399.6 285.7M398.0 283.2L395.6 275.6M395.6 275.6L400.7 276.0M297.1 278.8L293.8 280.8M290.4 282.9L293.0 284.3M290.4 282.9L291.3 290.4M291.3 290.4L289.1 292.8M286.9 295.1L288.6 301.5M288.6 301.5L283.7 299.4M283.7 299.4L281.6 301.4M288.6 301.5L282.1 306.8M282.1 306.8L281.9 303.8M233.6 114.6L238.2 110.6M238.2 110.6L235.7 108.8M238.2 110.6L238.6 104.2M238.6 104.2L235.7 101.8M232.9 99.4L236.0 98.6M232.9 99.4L224.9 101.5M224.9 101.5L222.9 108.3M222.9 108.3L227.7 109.2M227.7 109.2L230.4 113.3M222.9 108.3L226.5 113.4M226.5 113.4L230.2 110.2M230.2 110.2L230.0 105.3M226.5 113.4L223.7 120.7M223.7 120.7L229.6 118.9M229.6 118.9L231.2 116.0M223.7 120.7L228.2 125.2M228.2 125.2L227.1 131.5M227.1 131.5L233.9 135.5M380.2 229.9L383.7 237.6M383.7 237.6L390.9 237.2M390.9 237.2L394.9 242.2M394.9 242.2L401.4 240.1M401.4 240.1L402.8 246.1M402.8 246.1L405.7 247.8M401.4 240.1L402.0 232.4M402.0 232.4L395.5 228.8M395.5 228.8L394.5 221.5M394.5 221.5L388.8 217.2M388.8 217.2L388.3 209.9M388.3 209.9L381.5 205.4M381.5 205.4L385.9 203.0M385.9 203.0L388.4 203.9M381.5 205.4L381.6 201.4M316.8 190.6L323.8 187.6M323.8 187.6L324.1 180.0M324.1 180.0L330.3 176.0M330.3 176.0L329.4 168.5M368.0 251.1L373.0 244.7M373.0 244.7L372.3 241.3M371.7 237.9L369.3 239.2M371.7 237.9L378.6 233.0M378.6 233.0L376.4 224.9M376.4 224.9L381.3 218.2M381.3 218.2L377.8 217.4M381.3 218.2L379.9 214.9M378.5 211.7L381.8 212.4M378.5 211.7L371.4 209.3"/>
<path stroke="#f42808" stroke-width="1.35" d="M196.9 236.2L195.2 234.9M214.7 271.4L215.3 273.9M210.4 262.5L210.3 260.1M288.1 280.6L289.1 278.9M304.3 290.7L303.3 293.0M324.7 282.7L323.0 281.1M330.8 279.0L332.1 281.0M253.6 224.2L255.2 222.7M245.0 238.1L242.6 237.7M313.3 155.7L314.4 153.9M317.7 153.1L315.8 151.2M363.6 319.0L363.6 316.9M348.4 327.9L350.6 326.7M339.1 321.0L341.5 319.7M173.1 97.9L175.6 97.3M150.0 248.7L150.8 246.6M162.2 244.1L164.4 245.6M171.6 224.6L169.8 225.6M182.7 212.5L185.2 213.5M237.0 353.1L238.3 351.3M226.3 366.3L223.9 367.6M427.7 276.7L430.1 276.0M379.9 268.9L382.0 268.4M185.6 188.0L186.5 185.2M168.8 194.6L166.7 193.3M163.1 195.0L162.8 192.7M173.4 309.9L173.4 312.0M423.8 289.6L426.3 290.0M424.1 276.5L422.3 274.5M436.3 276.0L433.8 275.2M439.4 282.1L436.9 281.3M353.4 223.4L351.2 222.3M354.5 216.6L356.7 215.3M367.1 213.2L368.0 210.9M271.8 186.9L273.9 188.5M360.7 211.6L358.9 210.0M450.6 192.4L449.1 193.8M313.1 345.6L314.3 348.1M330.1 338.7L328.0 337.9M343.4 348.3L345.7 349.4M340.8 351.9L341.5 354.1M295.8 168.5L297.6 167.2M304.9 158.2L304.7 155.9M304.4 168.2L302.1 168.6M306.7 173.8L305.9 171.5M251.8 306.9L249.7 307.5M445.6 252.2L445.7 250.0M442.0 266.1L442.0 268.4M436.6 260.2L436.0 262.6M343.0 257.9L344.3 255.4M352.1 288.1L350.2 287.4M292.5 311.9L290.2 312.5M125.7 273.8L125.5 276.2M137.7 253.1L135.3 252.7M292.9 178.2L290.8 179.7M229.5 185.2L229.7 187.3M234.7 187.1L233.1 189.2M249.6 170.9L246.8 170.0M259.2 168.3L258.0 166.1M385.8 262.5L384.4 260.6M443.1 226.9L444.8 225.6M434.9 264.5L436.7 263.3M153.1 311.7L153.9 308.9M159.2 333.3L157.2 333.6M318.0 381.9L319.3 384.3M330.4 354.9L330.0 357.0M228.5 320.6L227.2 323.0M223.3 75.2L225.7 75.6M207.4 89.0L209.6 89.8M200.1 103.1L202.4 104.7M422.6 195.6L424.8 197.2M417.1 204.3L419.4 205.4M411.5 209.8L409.3 209.2M405.6 222.5L403.1 222.6M402.8 221.3L404.1 219.5M411.3 242.7L409.2 242.7M187.9 99.7L190.3 101.2M190.2 101.8L191.9 100.4M188.3 115.8L186.4 117.2M257.2 327.9L255.0 326.9M255.2 311.8L257.3 311.2M400.1 176.9L401.9 178.1M395.6 164.2L393.1 164.5M406.9 150.8L407.8 148.3M414.9 157.7L412.9 159.3M219.0 83.1L216.5 83.9M244.0 70.5L243.1 72.4M300.3 258.5L300.6 260.8M280.7 266.5L278.3 265.9M281.2 280.4L283.5 280.1M386.9 307.7L389.2 306.7M380.3 314.2L382.6 315.2M362.0 299.4L362.7 297.2M308.3 246.5L311.0 247.1M312.4 243.8L313.9 245.9M217.2 255.6L219.1 257.5M206.5 248.1L208.7 247.1M198.1 270.1L196.5 272.4M322.9 241.8L325.8 242.1M313.0 223.5L313.9 221.0M302.5 222.1L303.2 224.2M289.7 205.2L292.2 204.1M449.7 205.9L447.0 205.8M136.2 274.1L134.2 273.2M127.5 269.2L128.1 267.1M294.8 246.4L296.3 244.4M302.8 255.1L300.9 256.3M310.2 255.5L309.5 258.1M317.8 255.3L318.5 252.8M311.2 275.9L309.8 277.6M310.5 299.9L307.9 299.6M238.6 171.9L237.3 173.7M331.4 201.0L328.8 202.1M356.2 196.7L357.8 198.3M438.3 176.9L437.2 174.8M433.1 170.6L431.3 168.4M199.0 135.0L198.3 132.8M199.2 130.9L197.3 131.8M400.9 319.4L400.7 321.7M397.4 297.0L398.3 299.4M399.6 285.7L400.8 287.7M281.9 303.8L281.7 301.4M235.7 108.8L233.6 107.3M231.2 116.0L232.6 113.6M369.3 239.2L367.4 240.3M381.8 212.4L384.4 212.9"/>
<path stroke="#1a34f4" stroke-width="1.35" d="M210.2 228.6L212.3 226.3M222.7 225.7L226.1 223.3M229.9 224.2L233.8 225.1M245.3 205.4L250.2 203.6M253.3 207.8L250.4 212.1M222.4 265.3L222.2 263.0M249.3 228.7L246.9 231.1M316.0 156.6L320.0 155.4M292.4 353.5L295.0 352.7M163.4 247.2L160.8 248.4M162.2 236.3L161.1 238.3M185.3 203.9L185.0 200.5M239.4 357.3L236.5 359.8M237.9 363.5L239.2 367.4M246.2 362.3L243.7 358.0M247.1 354.3L251.7 356.3M218.6 111.0L221.1 108.6M231.3 104.9L229.7 103.3M245.7 110.0L246.5 112.2M358.6 197.8L356.7 194.5M353.0 194.7L349.3 195.0M350.4 197.2L351.3 199.0M340.6 189.5L337.4 189.8M410.6 282.7L407.0 282.9M407.8 289.3L406.4 291.0M404.2 280.3L401.5 277.7M391.9 275.9L388.9 273.3M155.8 324.6L153.8 326.3M179.4 298.5L183.2 297.8M424.6 280.6L425.6 284.6M381.5 220.4L384.9 220.8M437.0 262.7L439.3 262.3M259.5 180.9L256.0 181.7M355.2 235.0L357.3 234.5M352.1 216.1L349.8 216.0M441.6 190.8L439.4 191.9M315.1 344.0L318.6 345.5M296.6 171.6L293.6 170.1M295.3 160.3L297.7 158.4M263.6 295.9L266.0 296.4M436.7 267.9L431.9 266.3M431.9 261.3L436.6 259.7M432.5 264.0L427.4 265.5M424.4 261.1L427.6 256.8M419.6 254.3L417.5 253.4M419.2 256.6L416.2 257.9M362.7 299.1L361.5 302.5M229.6 366.3L230.8 369.9M127.3 150.2L124.0 150.1M288.8 320.2L288.0 324.0M283.1 321.8L284.7 318.2M294.0 314.6L295.2 311.2M293.3 308.1L291.4 305.0M298.1 281.5L302.4 283.5M301.8 288.3L297.1 289.2M129.8 264.9L131.5 262.3M131.9 276.5L127.5 279.7M123.0 276.5L124.8 271.3M163.5 254.4L164.3 259.9M159.4 262.4L155.4 258.4M289.6 158.8L289.0 153.9M293.6 151.8L296.9 155.5M309.3 158.8L309.0 155.1M315.5 153.5L316.7 151.7M307.6 157.5L304.6 153.4M307.6 149.2L312.5 150.8M233.0 183.6L236.7 184.5M388.0 238.4L390.2 236.9M438.6 237.2L439.5 240.2M437.3 243.5L435.2 246.7M149.3 313.5L152.1 315.0M165.3 334.6L168.9 336.4M324.9 359.2L327.1 356.9M323.2 348.2L319.6 346.6M301.9 318.3L299.2 318.7M224.4 322.7L225.5 325.0M204.9 80.0L202.6 80.2M202.5 89.4L204.9 89.5M278.2 167.2L275.9 166.9M293.9 163.1L288.7 161.7M288.5 156.3L293.5 154.4M252.1 305.9L254.7 304.9M400.0 150.6L401.5 148.8M225.6 79.9L229.2 77.6M228.8 80.6L228.6 83.0M302.8 257.1L299.9 255.7M292.0 269.5L291.6 275.0M286.2 276.2L283.4 271.5M399.0 322.3L401.0 320.5M387.9 322.4L386.5 324.6M373.7 311.7L370.0 310.5M371.0 304.4L373.3 305.2M356.5 221.1L356.2 223.4M356.8 207.1L355.6 208.9M298.5 266.7L300.9 264.4M303.1 254.5L305.4 252.6M305.2 249.2L305.0 245.9M307.8 243.6L310.6 241.3M206.0 253.2L203.0 254.9M191.1 262.8L188.9 262.1M197.0 265.4L200.2 267.2M200.8 270.8L201.4 274.4M204.5 275.1L207.6 275.8M330.5 239.7L333.3 239.6M293.8 212.9L290.3 212.8M308.2 253.1L311.1 252.4M345.9 187.7L350.7 187.0M352.8 191.4L349.3 194.7M357.5 193.9L360.8 192.9M431.9 185.1L432.5 181.5M387.2 333.7L386.2 337.2M403.9 305.0L406.0 301.3M399.5 294.6L396.2 294.1M293.8 280.8L290.4 282.9M293.0 284.3L295.1 285.6M289.1 292.8L286.9 295.1M281.6 301.4L279.9 303.1M235.7 101.8L232.9 99.4M236.0 98.6L238.6 98.0M405.7 247.8L408.1 249.1M388.4 203.9L390.5 204.7M381.6 201.4L381.7 197.4M372.3 241.3L371.7 237.9M377.8 217.4L375.1 216.8M379.9 214.9L378.5 211.7"/>
<path stroke="#c8c81e" stroke-width="1.35" d="M230.9 272.4L232.8 274.1M436.2 269.5L437.5 267.2M418.4 286.9L416.9 288.9"/>
</g>
</svg>

<!-- messages -->
<div class="abs" style="left:324px;top:616px;width:524px;height:11px;border:1px solid #d0d0d0;border-top:none;border-radius:0 0 3px 3px;background:#e6e6e6"></div>
<div class="abs" style="left:583px;top:607px;width:5px;height:3px;border-radius:50%;background:#8a8a8a"></div>
<div class="abs" style="left:500px;top:615px;width:173px;height:22px;border:1px solid #6c6c6c;border-radius:4px;background:linear-gradient(#b9b9b9,#8e8e8e 50%,#868686 51%,#9c9c9c);color:#fff;text-align:center;font-size:13px;line-height:19px;text-shadow:0 -1px 0 rgba(0,0,0,.35)">Messages</div>
<!-- window bottom edge -->
<div class="abs" style="left:0;top:667px;width:860px;height:3px;background:#b6bcc4;border-top:1px solid #8c8c8c"></div><div class="abs" style="left:0;top:668px;width:22px;height:2px;background:#3a2c2c"></div><div class="abs" style="left:806px;top:669px;width:54px;height:1px;background:#3f8a52"></div>
<svg class="abs" style="left:846px;top:654px" width="14" height="14" viewBox="0 0 14 14"><path d="M13 1 L1 13 M13 5 L5 13 M13 9 L9 13" stroke="#8e8e8e" stroke-width="1"/><path d="M13.5 2 L2 13.5 M13.5 6 L6 13.5 M13.5 10 L10 13.5" stroke="#fff" stroke-width="0.8"/></svg>

<!-- dialog -->
<div class="abs" style="left:29px;top:238px;width:348px;height:376px;border-radius:5px 5px 5px 5px;background:#ececec;box-shadow:0 19px 27px 7px rgba(0,0,0,.58),0 0 2px rgba(0,0,0,.5)">
  <div style="position:absolute;left:0;top:0;width:348px;height:23px;border-radius:5px 5px 0 0;background:linear-gradient(#eeeeee,#cfcfcf);border-bottom:1px solid #a9a9a9"></div>
  <div style="position:absolute;left:8px;top:5px;width:12px;height:12px;border-radius:50%;background:radial-gradient(circle at 50% 30%,#ff9d94,#e2322b 60%,#b8150f);border:1px solid #b33a33"></div>
  <div style="position:absolute;left:28px;top:5px;width:12px;height:12px;border-radius:50%;background:linear-gradient(#cfcfcf,#f6f6f6);border:1px solid #a9a9a9"></div>
  <div style="position:absolute;left:47px;top:5px;width:12px;height:12px;border-radius:50%;background:radial-gradient(circle at 50% 30%,#c9f0a8,#63b73c 60%,#3f8f22);border:1px solid #4c8a35"></div>
  <svg style="position:absolute;left:95px;top:5px" width="15" height="15" viewBox="0 0 18 18"><circle cx="3.5" cy="3.5" r="2.6" fill="#f08a2a"/><circle cx="14.5" cy="3.5" r="2.6" fill="#f08a2a"/><circle cx="3" cy="11" r="2.3" fill="#f08a2a"/><circle cx="15" cy="11" r="2.3" fill="#f08a2a"/><path d="M2.5 16.5 L9 2 L15.5 16.5 M5 11.5 H13" fill="none" stroke="#141414" stroke-width="2.9" stroke-linejoin="round"/></svg>
  <div style="position:absolute;left:114px;top:4px;font-family:'DejaVu Sans','Liberation Sans',sans-serif;font-size:13px;color:#3c3c3c;white-space:nowrap;letter-spacing:-0.38px">Ball and Stick Settings</div>
  <!-- group frame -->
  <div style="position:absolute;left:20px;top:48px;width:309px;height:308px;border:1px solid #cfcfcf;border-radius:4px;background:#e5e5e5"></div>
  <!-- tabs -->
  <div style="position:absolute;left:75px;top:37px;width:197px;height:21px;border:1px solid #9d9d9d;border-radius:4px;background:linear-gradient(#ffffff,#f3f3f3 50%,#eaeaea 51%,#f6f6f6);box-shadow:0 1px 0 rgba(0,0,0,.08)"></div>
  <div style="position:absolute;left:142px;top:37px;width:70px;height:21px;background:linear-gradient(#7d7d7d,#9a9a9a 50%,#8f8f8f 51%,#a5a5a5);border-top:1px solid #666;border-bottom:1px solid #777"></div>
  <div style="position:absolute;left:84px;top:38px;font-size:13px;line-height:16px">Setti</div>
  <div style="position:absolute;left:142px;top:38px;width:70px;text-align:center;font-size:13px;line-height:16px;color:#fff;text-shadow:0 1px 0 rgba(0,0,0,.3)">Objects</div>
  <div style="position:absolute;left:212px;top:38px;width:60px;text-align:center;font-size:13px;line-height:16px">Colors</div>
  <!-- tree -->
  <div style="position:absolute;left:41px;top:73px;width:266px;height:196px;border:2px solid #7ea6dc;border-radius:1px;background:#fff;box-shadow:0 0 2px 1px rgba(110,160,225,.6);overflow:hidden">
    <div style="position:absolute;left:0;top:1px;width:246px;height:14px;border:1px solid #b9b9b9;border-left:none;background:linear-gradient(#fff,#ededed);text-align:center;font-size:12px;line-height:12px;padding-left:17px">Atoms</div>
    <svg style="position:absolute;left:10px;top:4px" width="10" height="8" viewBox="0 0 10 8"><path d="M0.5 0.5 H9.5 L5 7.5 Z" fill="#b4b4b4"/></svg>
    <div style="position:absolute;left:247px;top:0;width:15px;height:192px;background:#fafafa;border-left:1px solid #e6e6e6"></div>
    <div style="position:absolute;left:251px;top:2px;width:7px;height:18px;border-radius:4px;background:#bdbdbd"></div>
    <div class="atom" style="top:14px">C 2157</div>
    <div class="atom" style="top:29px">C 2158</div>
    <div class="atom" style="top:44px">C 2159</div>
    <div class="atom" style="top:59px">C 2160</div>
    <div class="atom" style="top:74px">C 2161</div>
    <div class="atom" style="top:89px">C 2162</div>
    <div class="atom" style="top:104px">C 2163</div>
    <div class="atom" style="top:119px">C 2164</div>
    <div class="atom" style="top:134px">C 2165</div>
    <div class="atom" style="top:149px">C 2166</div>
    <div class="atom" style="top:164px">C 2167</div>
    <div class="atom" style="top:179px">C 2168</div>
  </div>
</div>
<div class="sqbtn" style="left:106px"><svg width="24" height="24" viewBox="0 0 24 24"><path d="M10.6 5h2.8v5.6H19v2.8h-5.6V19h-2.8v-5.6H5v-2.8h5.6z" fill="#62c23a" stroke="#44a022" stroke-width="0.8"/></svg></div>
<div class="sqbtn" style="left:161px"><svg width="24" height="24" viewBox="0 0 24 24"><rect x="5.5" y="10.6" width="13" height="2.8" rx="0.8" fill="#ee5a2e" stroke="#d2441c" stroke-width="0.7"/></svg></div>
<div class="sqbtn" style="left:217px"><svg width="24" height="24" viewBox="0 0 24 24"><path d="M4.5 9.2 L9.6 5.2 V7.8 C14.2 7.6 16.6 10.6 15.6 15.4 C15.2 17 13.8 17.4 13.2 16.8 C14.2 14.2 12.6 11.4 9.6 11.4 V13.6 Z" fill="#f4c432" stroke="#cf9a1e" stroke-width="0.7"/></svg></div>
<div class="sqbtn" style="left:273px"><svg width="24" height="24" viewBox="0 0 24 24"><rect x="4" y="5" width="16" height="12" fill="#dfe6ee" stroke="#8d9aa8" stroke-width="0.6"/><rect x="9" y="5" width="11" height="4" fill="#4f8fe0"/><rect x="9" y="10" width="11" height="3" fill="#6ea4ea"/><rect x="9" y="14" width="11" height="3" fill="#4f8fe0"/><path d="M4 9.5H20M4 13.5H20M9 5V17M14.5 5V17" stroke="#8d9aa8" stroke-width="0.6"/><path d="M15 11 L15 19 L17 17.3 L18.3 20 L19.5 19.4 L18.2 16.8 L20.5 16.6 Z" fill="#444" stroke="#ddd" stroke-width="0.5"/></svg></div>

<div class="badge" style="left:229px;top:111px">1</div>
<div class="badge" style="left:135px;top:267px">2</div>
<div class="badge" style="left:239px;top:530px">3</div>

<!-- mouse cursor -->
<svg class="abs" style="left:696px;top:-2px" width="16" height="22" viewBox="0 0 16 22"><path d="M4 0.5 L4 15.5 L7.4 12.4 L10 18.5 L12.6 17.4 L10 11.6 L14.4 11.4 Z" fill="#111" stroke="#fff" stroke-width="1.2" stroke-linejoin="round"/></svg>
<div class="abs" style="left:806px;top:0;width:54px;height:1px;background:#3f8a52"></div>
</body>
</html>
